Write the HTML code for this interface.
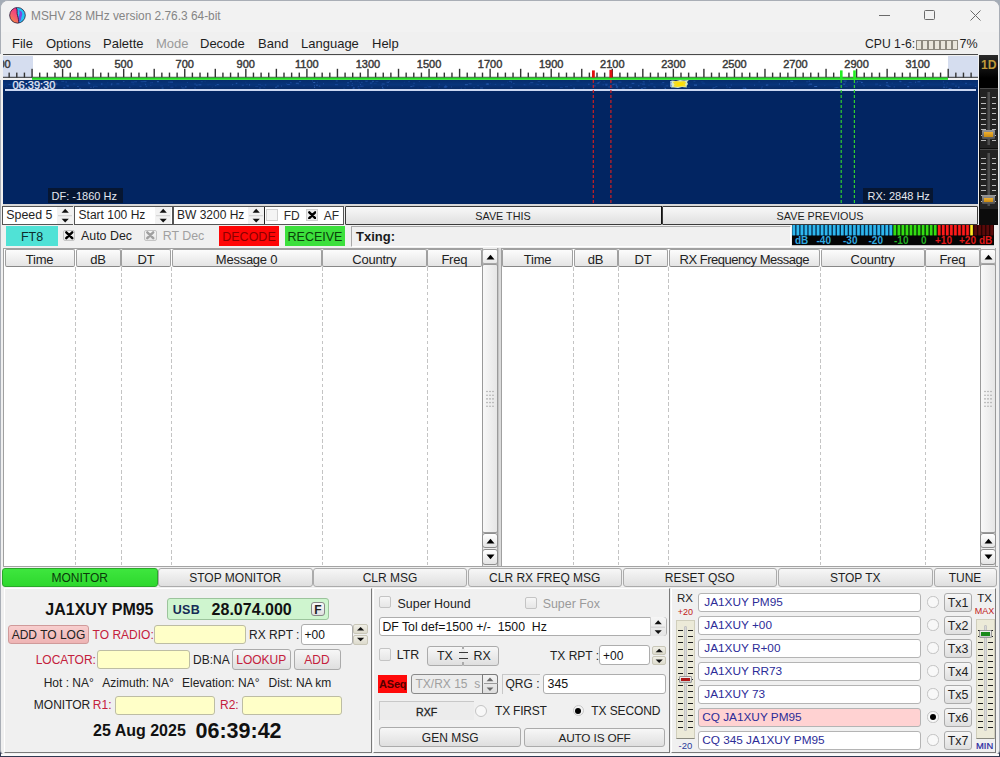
<!DOCTYPE html><html><head><meta charset="utf-8"><style>
*{margin:0;padding:0;box-sizing:border-box}
html,body{width:1000px;height:757px;overflow:hidden}
body{background:linear-gradient(#a4acb6,#7a8494 40%,#303850);position:relative;font-family:"Liberation Sans",sans-serif;color:#1e1e1e;font-size:12px}
div{position:absolute}
.t{white-space:nowrap;line-height:1}
.ctr{display:flex;align-items:center;justify-content:center;white-space:nowrap;line-height:1;padding-top:1.5px}
.btn{background:linear-gradient(#f7f7f7,#dfdfdf);border:1px solid #ababab;border-radius:3px}
.hdr{background:linear-gradient(#fcfcfc,#e4e4e4);border:1px solid #a0a0a0;border-bottom-color:#888;border-radius:2px;font-size:13px;color:#222;padding-top:2.5px !important;letter-spacing:-0.25px}
.yel{background:#ffffc8;border:1px solid #bdbda4;border-radius:3px}
.fld{background:#fff;border:1px solid #adadad;border-radius:3px}
.cb{background:linear-gradient(#f6f6f6,#e6e6e6);border:1px solid #c4c4c4;border-radius:2px}
.vd{background:repeating-linear-gradient(#c4c4c4 0 3.6px,transparent 3.6px 6.15px);width:1px}
</style></head><body>
<div style="left:0px;top:0px;width:999.5px;height:756px;background:#f0f0f0;border-radius:8px 8px 6px 6px;border:1px solid #a9aeb6;"></div>
<div style="left:1px;top:1px;width:998px;height:31px;background:#f2f2f2;border-radius:7px 7px 0 0;"></div>
<svg style="position:absolute;left:8.5px;top:6.5px" width="17" height="17" viewBox="0 0 17 17">
<defs><linearGradient id="gL" x1="0.2" y1="1" x2="0.7" y2="0"><stop offset="0" stop-color="#f29a2a"/><stop offset="0.45" stop-color="#f4606a"/><stop offset="1" stop-color="#f02c90"/></linearGradient>
<clipPath id="cc"><circle cx="8.5" cy="8.3" r="7.9"/></clipPath></defs>
<g clip-path="url(#cc)">
<rect x="0" y="0" width="17" height="17" fill="#24c4f2"/>
<path d="M9.5 3.2 C13 3.5 14 6.5 12.8 9 C11.8 11.5 12.5 13.5 10.5 14.8 C9.8 12 9 10 10 8 C11 6 10.5 4.5 9.5 3.2Z" fill="#7a48e0"/>
<path d="M7 0 C9 3 7.5 6 8.5 8.5 C9.5 11 9.5 14 10 17 L0 17 L0 0Z" fill="url(#gL)"/>
<path d="M7 0 C9 3 7.5 6 8.5 8.5 C9.5 11 9.5 14 10 17" stroke="#3a1040" stroke-width="0.9" fill="none"/>
</g>
<circle cx="8.5" cy="8.3" r="7.8" fill="none" stroke="#3a2040" stroke-width="0.8"/>
</svg>
<div class="t" style="left:31px;top:11px;font-size:11.9px;color:#858585">MSHV 28 MHz version 2.76.3 64-bit</div>
<div style="left:879px;top:15px;width:10.5px;height:1px;background:#6a6a6a"></div>
<div style="left:924px;top:10px;width:11px;height:10px;border:1px solid #6a6a6a;border-radius:1.5px"></div>
<svg style="position:absolute;left:970px;top:10px" width="11" height="11" viewBox="0 0 11 11"><path d="M0.5 0.5L10.5 10.5M10.5 0.5L0.5 10.5" stroke="#6a6a6a" stroke-width="1"/></svg>
<div class="t" style="left:12px;top:36.6px;font-size:13px;color:#1e1e1e">File</div>
<div class="t" style="left:46px;top:36.6px;font-size:13px;color:#1e1e1e">Options</div>
<div class="t" style="left:103px;top:36.6px;font-size:13px;color:#1e1e1e">Palette</div>
<div class="t" style="left:156px;top:36.6px;font-size:13px;color:#9a9a9a">Mode</div>
<div class="t" style="left:200px;top:36.6px;font-size:13px;color:#1e1e1e">Decode</div>
<div class="t" style="left:258px;top:36.6px;font-size:13px;color:#1e1e1e">Band</div>
<div class="t" style="left:301px;top:36.6px;font-size:13px;color:#1e1e1e">Language</div>
<div class="t" style="left:372px;top:36.6px;font-size:13px;color:#1e1e1e">Help</div>
<div class="t" style="left:865px;top:37.5px;font-size:12.2px;color:#1e1e1e">CPU 1-6:</div>
<div style="left:916px;top:39.5px;width:5.6px;height:10.5px;border:1px solid #8e8a80;background:#e9e6dc"></div>
<div style="left:922px;top:39.5px;width:5.6px;height:10.5px;border:1px solid #8e8a80;background:#e9e6dc"></div>
<div style="left:928px;top:39.5px;width:5.6px;height:10.5px;border:1px solid #8e8a80;background:#e9e6dc"></div>
<div style="left:934px;top:39.5px;width:5.6px;height:10.5px;border:1px solid #8e8a80;background:#e9e6dc"></div>
<div style="left:940px;top:39.5px;width:5.6px;height:10.5px;border:1px solid #8e8a80;background:#e9e6dc"></div>
<div style="left:946px;top:39.5px;width:5.6px;height:10.5px;border:1px solid #8e8a80;background:#e9e6dc"></div>
<div style="left:952px;top:39.5px;width:5.6px;height:10.5px;border:1px solid #8e8a80;background:#e9e6dc"></div>
<div class="t" style="left:959.5px;top:37.5px;font-size:12.5px;color:#1e1e1e">7%</div>
<div style="left:3px;top:54px;width:975px;height:1.4px;background:#4a4a4a"></div>
<div style="left:3px;top:55.5px;width:975px;height:22px;background:#fff"></div>
<div style="left:3px;top:55.5px;width:29.5px;height:22px;background:#d5ddef"></div>
<div style="left:948px;top:55.5px;width:30px;height:22px;background:#d5ddef"></div>
<svg style="position:absolute;left:0;top:0" width="1000" height="90"><rect x="8.46" y="72.6" width="1.4" height="5" fill="#333"/><rect x="16.09" y="72.6" width="1.4" height="5" fill="#333"/><rect x="23.73" y="72.6" width="1.4" height="5" fill="#333"/><rect x="31.36" y="68.8" width="1.4" height="8.8" fill="#333"/><rect x="39.00" y="72.6" width="1.4" height="5" fill="#333"/><rect x="46.63" y="72.6" width="1.4" height="5" fill="#333"/><rect x="54.27" y="72.6" width="1.4" height="5" fill="#333"/><rect x="61.90" y="68.8" width="1.4" height="8.8" fill="#333"/><rect x="69.53" y="72.6" width="1.4" height="5" fill="#333"/><rect x="77.17" y="72.6" width="1.4" height="5" fill="#333"/><rect x="84.80" y="72.6" width="1.4" height="5" fill="#333"/><rect x="92.44" y="68.8" width="1.4" height="8.8" fill="#333"/><rect x="100.07" y="72.6" width="1.4" height="5" fill="#333"/><rect x="107.71" y="72.6" width="1.4" height="5" fill="#333"/><rect x="115.34" y="72.6" width="1.4" height="5" fill="#333"/><rect x="122.98" y="68.8" width="1.4" height="8.8" fill="#333"/><rect x="130.61" y="72.6" width="1.4" height="5" fill="#333"/><rect x="138.25" y="72.6" width="1.4" height="5" fill="#333"/><rect x="145.88" y="72.6" width="1.4" height="5" fill="#333"/><rect x="153.51" y="68.8" width="1.4" height="8.8" fill="#333"/><rect x="161.15" y="72.6" width="1.4" height="5" fill="#333"/><rect x="168.78" y="72.6" width="1.4" height="5" fill="#333"/><rect x="176.42" y="72.6" width="1.4" height="5" fill="#333"/><rect x="184.05" y="68.8" width="1.4" height="8.8" fill="#333"/><rect x="191.69" y="72.6" width="1.4" height="5" fill="#333"/><rect x="199.32" y="72.6" width="1.4" height="5" fill="#333"/><rect x="206.96" y="72.6" width="1.4" height="5" fill="#333"/><rect x="214.59" y="68.8" width="1.4" height="8.8" fill="#333"/><rect x="222.22" y="72.6" width="1.4" height="5" fill="#333"/><rect x="229.86" y="72.6" width="1.4" height="5" fill="#333"/><rect x="237.49" y="72.6" width="1.4" height="5" fill="#333"/><rect x="245.13" y="68.8" width="1.4" height="8.8" fill="#333"/><rect x="252.76" y="72.6" width="1.4" height="5" fill="#333"/><rect x="260.40" y="72.6" width="1.4" height="5" fill="#333"/><rect x="268.03" y="72.6" width="1.4" height="5" fill="#333"/><rect x="275.67" y="68.8" width="1.4" height="8.8" fill="#333"/><rect x="283.30" y="72.6" width="1.4" height="5" fill="#333"/><rect x="290.94" y="72.6" width="1.4" height="5" fill="#333"/><rect x="298.57" y="72.6" width="1.4" height="5" fill="#333"/><rect x="306.20" y="68.8" width="1.4" height="8.8" fill="#333"/><rect x="313.84" y="72.6" width="1.4" height="5" fill="#333"/><rect x="321.47" y="72.6" width="1.4" height="5" fill="#333"/><rect x="329.11" y="72.6" width="1.4" height="5" fill="#333"/><rect x="336.74" y="68.8" width="1.4" height="8.8" fill="#333"/><rect x="344.38" y="72.6" width="1.4" height="5" fill="#333"/><rect x="352.01" y="72.6" width="1.4" height="5" fill="#333"/><rect x="359.65" y="72.6" width="1.4" height="5" fill="#333"/><rect x="367.28" y="68.8" width="1.4" height="8.8" fill="#333"/><rect x="374.91" y="72.6" width="1.4" height="5" fill="#333"/><rect x="382.55" y="72.6" width="1.4" height="5" fill="#333"/><rect x="390.18" y="72.6" width="1.4" height="5" fill="#333"/><rect x="397.82" y="68.8" width="1.4" height="8.8" fill="#333"/><rect x="405.45" y="72.6" width="1.4" height="5" fill="#333"/><rect x="413.09" y="72.6" width="1.4" height="5" fill="#333"/><rect x="420.72" y="72.6" width="1.4" height="5" fill="#333"/><rect x="428.36" y="68.8" width="1.4" height="8.8" fill="#333"/><rect x="435.99" y="72.6" width="1.4" height="5" fill="#333"/><rect x="443.62" y="72.6" width="1.4" height="5" fill="#333"/><rect x="451.26" y="72.6" width="1.4" height="5" fill="#333"/><rect x="458.89" y="68.8" width="1.4" height="8.8" fill="#333"/><rect x="466.53" y="72.6" width="1.4" height="5" fill="#333"/><rect x="474.16" y="72.6" width="1.4" height="5" fill="#333"/><rect x="481.80" y="72.6" width="1.4" height="5" fill="#333"/><rect x="489.43" y="68.8" width="1.4" height="8.8" fill="#333"/><rect x="497.07" y="72.6" width="1.4" height="5" fill="#333"/><rect x="504.70" y="72.6" width="1.4" height="5" fill="#333"/><rect x="512.34" y="72.6" width="1.4" height="5" fill="#333"/><rect x="519.97" y="68.8" width="1.4" height="8.8" fill="#333"/><rect x="527.60" y="72.6" width="1.4" height="5" fill="#333"/><rect x="535.24" y="72.6" width="1.4" height="5" fill="#333"/><rect x="542.87" y="72.6" width="1.4" height="5" fill="#333"/><rect x="550.51" y="68.8" width="1.4" height="8.8" fill="#333"/><rect x="558.14" y="72.6" width="1.4" height="5" fill="#333"/><rect x="565.78" y="72.6" width="1.4" height="5" fill="#333"/><rect x="573.41" y="72.6" width="1.4" height="5" fill="#333"/><rect x="581.05" y="68.8" width="1.4" height="8.8" fill="#333"/><rect x="588.68" y="72.6" width="1.4" height="5" fill="#333"/><rect x="596.31" y="72.6" width="1.4" height="5" fill="#333"/><rect x="603.95" y="72.6" width="1.4" height="5" fill="#333"/><rect x="611.58" y="68.8" width="1.4" height="8.8" fill="#333"/><rect x="619.22" y="72.6" width="1.4" height="5" fill="#333"/><rect x="626.85" y="72.6" width="1.4" height="5" fill="#333"/><rect x="634.49" y="72.6" width="1.4" height="5" fill="#333"/><rect x="642.12" y="68.8" width="1.4" height="8.8" fill="#333"/><rect x="649.76" y="72.6" width="1.4" height="5" fill="#333"/><rect x="657.39" y="72.6" width="1.4" height="5" fill="#333"/><rect x="665.03" y="72.6" width="1.4" height="5" fill="#333"/><rect x="672.66" y="68.8" width="1.4" height="8.8" fill="#333"/><rect x="680.29" y="72.6" width="1.4" height="5" fill="#333"/><rect x="687.93" y="72.6" width="1.4" height="5" fill="#333"/><rect x="695.56" y="72.6" width="1.4" height="5" fill="#333"/><rect x="703.20" y="68.8" width="1.4" height="8.8" fill="#333"/><rect x="710.83" y="72.6" width="1.4" height="5" fill="#333"/><rect x="718.47" y="72.6" width="1.4" height="5" fill="#333"/><rect x="726.10" y="72.6" width="1.4" height="5" fill="#333"/><rect x="733.74" y="68.8" width="1.4" height="8.8" fill="#333"/><rect x="741.37" y="72.6" width="1.4" height="5" fill="#333"/><rect x="749.00" y="72.6" width="1.4" height="5" fill="#333"/><rect x="756.64" y="72.6" width="1.4" height="5" fill="#333"/><rect x="764.27" y="68.8" width="1.4" height="8.8" fill="#333"/><rect x="771.91" y="72.6" width="1.4" height="5" fill="#333"/><rect x="779.54" y="72.6" width="1.4" height="5" fill="#333"/><rect x="787.18" y="72.6" width="1.4" height="5" fill="#333"/><rect x="794.81" y="68.8" width="1.4" height="8.8" fill="#333"/><rect x="802.45" y="72.6" width="1.4" height="5" fill="#333"/><rect x="810.08" y="72.6" width="1.4" height="5" fill="#333"/><rect x="817.72" y="72.6" width="1.4" height="5" fill="#333"/><rect x="825.35" y="68.8" width="1.4" height="8.8" fill="#333"/><rect x="832.98" y="72.6" width="1.4" height="5" fill="#333"/><rect x="840.62" y="72.6" width="1.4" height="5" fill="#333"/><rect x="848.25" y="72.6" width="1.4" height="5" fill="#333"/><rect x="855.89" y="68.8" width="1.4" height="8.8" fill="#333"/><rect x="863.52" y="72.6" width="1.4" height="5" fill="#333"/><rect x="871.16" y="72.6" width="1.4" height="5" fill="#333"/><rect x="878.79" y="72.6" width="1.4" height="5" fill="#333"/><rect x="886.43" y="68.8" width="1.4" height="8.8" fill="#333"/><rect x="894.06" y="72.6" width="1.4" height="5" fill="#333"/><rect x="901.69" y="72.6" width="1.4" height="5" fill="#333"/><rect x="909.33" y="72.6" width="1.4" height="5" fill="#333"/><rect x="916.96" y="68.8" width="1.4" height="8.8" fill="#333"/><rect x="924.60" y="72.6" width="1.4" height="5" fill="#333"/><rect x="932.23" y="72.6" width="1.4" height="5" fill="#333"/><rect x="939.87" y="72.6" width="1.4" height="5" fill="#333"/><rect x="947.50" y="68.8" width="1.4" height="8.8" fill="#333"/><rect x="955.14" y="72.6" width="1.4" height="5" fill="#333"/><rect x="962.77" y="72.6" width="1.4" height="5" fill="#333"/><rect x="970.41" y="72.6" width="1.4" height="5" fill="#333"/><rect x="3" y="76.8" width="975" height="1" fill="#333"/><rect x="32" y="77.6" width="916" height="2.2" fill="#22dd22"/><rect x="592" y="70.4" width="2.8" height="7.2" fill="#e01010"/><rect x="609.4" y="69.8" width="3" height="7.8" fill="#e01010"/><rect x="840" y="70.4" width="2.6" height="9" fill="#22ee22"/><rect x="853.2" y="70.4" width="2.6" height="9" fill="#22ee22"/></svg>
<div class="t" style="left:-18.5px;top:58.8px;width:40px;text-align:center;font-size:11px;-webkit-text-stroke:0.45px #3a3a3a;color:#3a3a3a">100</div>
<div class="t" style="left:42.6px;top:58.8px;width:40px;text-align:center;font-size:11px;-webkit-text-stroke:0.45px #3a3a3a;color:#3a3a3a">300</div>
<div class="t" style="left:103.7px;top:58.8px;width:40px;text-align:center;font-size:11px;-webkit-text-stroke:0.45px #3a3a3a;color:#3a3a3a">500</div>
<div class="t" style="left:164.8px;top:58.8px;width:40px;text-align:center;font-size:11px;-webkit-text-stroke:0.45px #3a3a3a;color:#3a3a3a">700</div>
<div class="t" style="left:225.8px;top:58.8px;width:40px;text-align:center;font-size:11px;-webkit-text-stroke:0.45px #3a3a3a;color:#3a3a3a">900</div>
<div class="t" style="left:286.9px;top:58.8px;width:40px;text-align:center;font-size:11px;-webkit-text-stroke:0.45px #3a3a3a;color:#3a3a3a">1100</div>
<div class="t" style="left:348.0px;top:58.8px;width:40px;text-align:center;font-size:11px;-webkit-text-stroke:0.45px #3a3a3a;color:#3a3a3a">1300</div>
<div class="t" style="left:409.1px;top:58.8px;width:40px;text-align:center;font-size:11px;-webkit-text-stroke:0.45px #3a3a3a;color:#3a3a3a">1500</div>
<div class="t" style="left:470.1px;top:58.8px;width:40px;text-align:center;font-size:11px;-webkit-text-stroke:0.45px #3a3a3a;color:#3a3a3a">1700</div>
<div class="t" style="left:531.2px;top:58.8px;width:40px;text-align:center;font-size:11px;-webkit-text-stroke:0.45px #3a3a3a;color:#3a3a3a">1900</div>
<div class="t" style="left:592.3px;top:58.8px;width:40px;text-align:center;font-size:11px;-webkit-text-stroke:0.45px #3a3a3a;color:#3a3a3a">2100</div>
<div class="t" style="left:653.4px;top:58.8px;width:40px;text-align:center;font-size:11px;-webkit-text-stroke:0.45px #3a3a3a;color:#3a3a3a">2300</div>
<div class="t" style="left:714.4px;top:58.8px;width:40px;text-align:center;font-size:11px;-webkit-text-stroke:0.45px #3a3a3a;color:#3a3a3a">2500</div>
<div class="t" style="left:775.5px;top:58.8px;width:40px;text-align:center;font-size:11px;-webkit-text-stroke:0.45px #3a3a3a;color:#3a3a3a">2700</div>
<div class="t" style="left:836.6px;top:58.8px;width:40px;text-align:center;font-size:11px;-webkit-text-stroke:0.45px #3a3a3a;color:#3a3a3a">2900</div>
<div class="t" style="left:897.7px;top:58.8px;width:40px;text-align:center;font-size:11px;-webkit-text-stroke:0.45px #3a3a3a;color:#3a3a3a">3100</div>
<div style="left:0px;top:54px;width:3px;height:26px;background:#f0f0f0"></div>
<div style="left:3px;top:79.8px;width:975px;height:123.8px;background:#022562"></div>
<div style="left:3px;top:79.8px;width:975px;height:9.6px;background:linear-gradient(#062c6c,#08347a 50%,#062a66)"></div>
<svg style="position:absolute;left:0;top:79px" width="1000" height="11"><rect x="319.1" y="6.4" width="1" height="1" fill="#1f50a8" opacity="0.51"/><rect x="61.3" y="1.8" width="3" height="1" fill="#3a70c8" opacity="0.38"/><rect x="93.0" y="7.7" width="1" height="1" fill="#2a60b8" opacity="0.63"/><rect x="570.5" y="5.9" width="1" height="1" fill="#2a60b8" opacity="0.37"/><rect x="837.7" y="2.6" width="1" height="1" fill="#184a9a" opacity="0.60"/><rect x="666.5" y="5.8" width="1.5" height="1" fill="#184a9a" opacity="0.39"/><rect x="605.4" y="5.5" width="2" height="1" fill="#3a70c8" opacity="0.61"/><rect x="444.6" y="7.5" width="1.5" height="1" fill="#1f50a8" opacity="0.61"/><rect x="712.6" y="8.9" width="1" height="1" fill="#3a70c8" opacity="0.42"/><rect x="334.9" y="5.2" width="3" height="1" fill="#1f50a8" opacity="0.73"/><rect x="921.3" y="6.5" width="1" height="1" fill="#184a9a" opacity="0.64"/><rect x="281.1" y="6.5" width="1" height="1" fill="#3a70c8" opacity="0.51"/><rect x="597.6" y="3.1" width="2" height="1" fill="#2a60b8" opacity="0.68"/><rect x="486.6" y="4.5" width="2" height="1" fill="#2a60b8" opacity="0.72"/><rect x="843.1" y="4.6" width="2" height="1" fill="#3a70c8" opacity="0.78"/><rect x="151.4" y="3.2" width="1.5" height="1" fill="#1f50a8" opacity="0.57"/><rect x="576.4" y="1.5" width="3" height="1" fill="#184a9a" opacity="0.62"/><rect x="314.1" y="7.9" width="1" height="1" fill="#3a70c8" opacity="0.75"/><rect x="778.9" y="4.5" width="1" height="1" fill="#3a70c8" opacity="0.64"/><rect x="65.4" y="3.1" width="1.5" height="1" fill="#1f50a8" opacity="0.50"/><rect x="56.0" y="2.6" width="1" height="1" fill="#184a9a" opacity="0.63"/><rect x="73.2" y="4.3" width="2" height="1" fill="#184a9a" opacity="0.62"/><rect x="464.9" y="5.2" width="3" height="1" fill="#3a70c8" opacity="0.57"/><rect x="88.3" y="4.1" width="2" height="1" fill="#3a70c8" opacity="0.72"/><rect x="161.6" y="8.6" width="2" height="1" fill="#2a60b8" opacity="0.66"/><rect x="891.7" y="3.7" width="1" height="1" fill="#184a9a" opacity="0.58"/><rect x="886.0" y="3.2" width="2" height="1" fill="#2a60b8" opacity="0.63"/><rect x="194.3" y="4.5" width="1.5" height="1" fill="#2a60b8" opacity="0.58"/><rect x="349.9" y="1.7" width="2" height="1" fill="#3a70c8" opacity="0.47"/><rect x="358.7" y="3.2" width="1.5" height="1" fill="#184a9a" opacity="0.44"/><rect x="610.3" y="7.8" width="3" height="1" fill="#184a9a" opacity="0.71"/><rect x="887.5" y="7.1" width="3" height="1" fill="#2a60b8" opacity="0.55"/><rect x="621.8" y="8.6" width="3" height="1" fill="#3a70c8" opacity="0.53"/><rect x="169.9" y="2.6" width="3" height="1" fill="#2a60b8" opacity="0.63"/><rect x="583.0" y="8.5" width="1.5" height="1" fill="#2a60b8" opacity="0.36"/><rect x="32.2" y="5.3" width="2" height="1" fill="#184a9a" opacity="0.59"/><rect x="814.2" y="7.0" width="3" height="1" fill="#3a70c8" opacity="0.72"/><rect x="856.8" y="2.6" width="1" height="1" fill="#3a70c8" opacity="0.70"/><rect x="150.3" y="6.1" width="1" height="1" fill="#1f50a8" opacity="0.50"/><rect x="765.7" y="5.7" width="1.5" height="1" fill="#2a60b8" opacity="0.47"/><rect x="754.1" y="5.7" width="1" height="1" fill="#3a70c8" opacity="0.50"/><rect x="198.4" y="5.3" width="3" height="1" fill="#2a60b8" opacity="0.66"/><rect x="855.2" y="3.4" width="1.5" height="1" fill="#3a70c8" opacity="0.41"/><rect x="123.0" y="2.0" width="1.5" height="1" fill="#3a70c8" opacity="0.38"/><rect x="654.4" y="8.2" width="1.5" height="1" fill="#184a9a" opacity="0.41"/><rect x="861.3" y="3.1" width="1" height="1" fill="#3a70c8" opacity="0.75"/><rect x="969.3" y="4.7" width="2" height="1" fill="#184a9a" opacity="0.39"/><rect x="360.0" y="4.9" width="1" height="1" fill="#3a70c8" opacity="0.50"/><rect x="610.2" y="2.0" width="1.5" height="1" fill="#1f50a8" opacity="0.39"/><rect x="660.7" y="4.5" width="3" height="1" fill="#184a9a" opacity="0.39"/><rect x="417.6" y="8.5" width="1" height="1" fill="#184a9a" opacity="0.39"/><rect x="835.5" y="8.0" width="3" height="1" fill="#1f50a8" opacity="0.50"/><rect x="264.8" y="5.5" width="1.5" height="1" fill="#1f50a8" opacity="0.79"/><rect x="259.0" y="8.5" width="2" height="1" fill="#2a60b8" opacity="0.48"/><rect x="490.1" y="4.1" width="1" height="1" fill="#184a9a" opacity="0.37"/><rect x="22.9" y="8.8" width="3" height="1" fill="#2a60b8" opacity="0.77"/><rect x="424.2" y="7.8" width="3" height="1" fill="#184a9a" opacity="0.66"/><rect x="958.0" y="7.7" width="1.5" height="1" fill="#3a70c8" opacity="0.80"/><rect x="858.5" y="1.9" width="3" height="1" fill="#184a9a" opacity="0.62"/><rect x="676.9" y="2.9" width="2" height="1" fill="#3a70c8" opacity="0.35"/><rect x="358.2" y="8.9" width="2" height="1" fill="#2a60b8" opacity="0.37"/><rect x="860.9" y="2.9" width="2" height="1" fill="#3a70c8" opacity="0.39"/><rect x="387.2" y="6.2" width="1" height="1" fill="#2a60b8" opacity="0.65"/><rect x="382.8" y="8.9" width="1.5" height="1" fill="#184a9a" opacity="0.68"/><rect x="628.9" y="7.8" width="3" height="1" fill="#2a60b8" opacity="0.76"/><rect x="793.5" y="6.6" width="1.5" height="1" fill="#1f50a8" opacity="0.36"/><rect x="134.1" y="2.3" width="3" height="1" fill="#1f50a8" opacity="0.63"/><rect x="612.4" y="5.2" width="1" height="1" fill="#3a70c8" opacity="0.71"/><rect x="730.8" y="5.5" width="1" height="1" fill="#3a70c8" opacity="0.46"/><rect x="77.2" y="7.0" width="1.5" height="1" fill="#2a60b8" opacity="0.68"/><rect x="951.5" y="4.4" width="3" height="1" fill="#184a9a" opacity="0.70"/><rect x="603.5" y="2.1" width="1.5" height="1" fill="#184a9a" opacity="0.46"/><rect x="725.9" y="5.8" width="1" height="1" fill="#3a70c8" opacity="0.38"/><rect x="287.1" y="5.0" width="3" height="1" fill="#1f50a8" opacity="0.80"/><rect x="537.6" y="2.1" width="3" height="1" fill="#1f50a8" opacity="0.48"/><rect x="79.2" y="9.0" width="2" height="1" fill="#3a70c8" opacity="0.44"/><rect x="922.2" y="5.9" width="1.5" height="1" fill="#184a9a" opacity="0.78"/><rect x="687.2" y="8.2" width="3" height="1" fill="#3a70c8" opacity="0.36"/><rect x="8.5" y="4.9" width="2" height="1" fill="#2a60b8" opacity="0.54"/><rect x="369.8" y="4.0" width="2" height="1" fill="#184a9a" opacity="0.73"/><rect x="286.1" y="4.4" width="1" height="1" fill="#184a9a" opacity="0.77"/><rect x="277.2" y="6.5" width="1.5" height="1" fill="#2a60b8" opacity="0.79"/><rect x="428.2" y="7.3" width="3" height="1" fill="#1f50a8" opacity="0.72"/><rect x="617.0" y="8.6" width="1.5" height="1" fill="#1f50a8" opacity="0.37"/><rect x="715.4" y="7.1" width="2" height="1" fill="#3a70c8" opacity="0.37"/><rect x="904.0" y="5.0" width="2" height="1" fill="#184a9a" opacity="0.48"/><rect x="387.5" y="2.7" width="1.5" height="1" fill="#3a70c8" opacity="0.60"/><rect x="444.4" y="7.2" width="3" height="1" fill="#2a60b8" opacity="0.60"/><rect x="241.8" y="5.7" width="2" height="1" fill="#2a60b8" opacity="0.52"/><rect x="790.1" y="1.7" width="3" height="1" fill="#3a70c8" opacity="0.54"/><rect x="513.4" y="4.0" width="1" height="1" fill="#3a70c8" opacity="0.47"/><rect x="943.7" y="5.3" width="1.5" height="1" fill="#1f50a8" opacity="0.47"/><rect x="246.0" y="4.8" width="2" height="1" fill="#1f50a8" opacity="0.41"/><rect x="480.1" y="8.5" width="3" height="1" fill="#3a70c8" opacity="0.46"/><rect x="110.8" y="5.4" width="1" height="1" fill="#3a70c8" opacity="0.39"/><rect x="758.6" y="2.4" width="1" height="1" fill="#184a9a" opacity="0.78"/><rect x="612.7" y="4.8" width="1" height="1" fill="#1f50a8" opacity="0.38"/><rect x="381.4" y="6.0" width="1" height="1" fill="#184a9a" opacity="0.80"/><rect x="275.2" y="7.8" width="1.5" height="1" fill="#3a70c8" opacity="0.59"/><rect x="535.6" y="4.6" width="2" height="1" fill="#1f50a8" opacity="0.36"/><rect x="412.4" y="6.5" width="2" height="1" fill="#2a60b8" opacity="0.57"/><rect x="356.5" y="1.6" width="2" height="1" fill="#1f50a8" opacity="0.44"/><rect x="945.8" y="7.7" width="1.5" height="1" fill="#3a70c8" opacity="0.45"/><rect x="742.7" y="8.6" width="3" height="1" fill="#2a60b8" opacity="0.75"/><rect x="899.3" y="1.7" width="1.5" height="1" fill="#3a70c8" opacity="0.37"/><rect x="63.3" y="8.2" width="2" height="1" fill="#1f50a8" opacity="0.80"/><rect x="908.6" y="2.9" width="3" height="1" fill="#1f50a8" opacity="0.49"/><rect x="960.4" y="2.3" width="1" height="1" fill="#184a9a" opacity="0.39"/><rect x="373.7" y="3.8" width="3" height="1" fill="#1f50a8" opacity="0.37"/><rect x="464.3" y="8.4" width="1.5" height="1" fill="#184a9a" opacity="0.51"/><rect x="875.1" y="4.6" width="3" height="1" fill="#1f50a8" opacity="0.52"/><rect x="65.1" y="2.0" width="2" height="1" fill="#184a9a" opacity="0.47"/><rect x="312.0" y="1.5" width="1" height="1" fill="#1f50a8" opacity="0.72"/><rect x="795.4" y="5.2" width="1" height="1" fill="#184a9a" opacity="0.72"/><rect x="323.0" y="4.2" width="1" height="1" fill="#2a60b8" opacity="0.53"/><rect x="160.1" y="6.4" width="3" height="1" fill="#184a9a" opacity="0.42"/><rect x="418.8" y="2.0" width="1" height="1" fill="#2a60b8" opacity="0.39"/><rect x="438.6" y="4.6" width="1.5" height="1" fill="#1f50a8" opacity="0.70"/><rect x="290.1" y="3.5" width="2" height="1" fill="#184a9a" opacity="0.44"/><rect x="245.0" y="2.6" width="1.5" height="1" fill="#184a9a" opacity="0.38"/><rect x="249.1" y="5.4" width="1" height="1" fill="#3a70c8" opacity="0.80"/><rect x="104.3" y="7.6" width="3" height="1" fill="#184a9a" opacity="0.37"/><rect x="289.9" y="2.9" width="1.5" height="1" fill="#1f50a8" opacity="0.52"/><rect x="845.1" y="3.4" width="1" height="1" fill="#1f50a8" opacity="0.64"/><rect x="693.4" y="1.8" width="2" height="1" fill="#2a60b8" opacity="0.37"/><rect x="974.9" y="7.0" width="1.5" height="1" fill="#1f50a8" opacity="0.72"/><rect x="401.7" y="6.2" width="1" height="1" fill="#2a60b8" opacity="0.36"/><rect x="485.8" y="4.6" width="3" height="1" fill="#2a60b8" opacity="0.64"/><rect x="93.4" y="6.7" width="3" height="1" fill="#184a9a" opacity="0.65"/><rect x="410.3" y="7.1" width="2" height="1" fill="#3a70c8" opacity="0.54"/><rect x="357.9" y="7.0" width="1.5" height="1" fill="#1f50a8" opacity="0.55"/><rect x="156.9" y="2.2" width="2" height="1" fill="#3a70c8" opacity="0.70"/><rect x="131.1" y="2.6" width="3" height="1" fill="#1f50a8" opacity="0.61"/><rect x="171.5" y="2.7" width="1.5" height="1" fill="#1f50a8" opacity="0.40"/><rect x="942.9" y="2.4" width="1" height="1" fill="#3a70c8" opacity="0.49"/><rect x="626.1" y="6.2" width="1.5" height="1" fill="#3a70c8" opacity="0.43"/><rect x="216.6" y="5.4" width="3" height="1" fill="#184a9a" opacity="0.41"/><rect x="875.4" y="5.7" width="1" height="1" fill="#184a9a" opacity="0.40"/><rect x="613.2" y="4.7" width="1.5" height="1" fill="#3a70c8" opacity="0.53"/><rect x="361.4" y="2.8" width="1" height="1" fill="#3a70c8" opacity="0.56"/><rect x="791.2" y="2.0" width="2" height="1" fill="#3a70c8" opacity="0.51"/><rect x="783.2" y="6.4" width="1" height="1" fill="#2a60b8" opacity="0.39"/><rect x="501.1" y="5.3" width="3" height="1" fill="#2a60b8" opacity="0.36"/><rect x="676.8" y="2.5" width="3" height="1" fill="#184a9a" opacity="0.78"/><rect x="893.6" y="7.4" width="1.5" height="1" fill="#1f50a8" opacity="0.72"/><rect x="597.1" y="3.9" width="2" height="1" fill="#3a70c8" opacity="0.41"/><rect x="207.1" y="5.3" width="2" height="1" fill="#184a9a" opacity="0.37"/><rect x="181.6" y="8.5" width="2" height="1" fill="#3a70c8" opacity="0.43"/><rect x="766.3" y="5.5" width="2" height="1" fill="#3a70c8" opacity="0.60"/><rect x="615.9" y="7.5" width="2" height="1" fill="#3a70c8" opacity="0.80"/><rect x="565.0" y="7.2" width="3" height="1" fill="#2a60b8" opacity="0.43"/><rect x="726.3" y="7.6" width="2" height="1" fill="#184a9a" opacity="0.64"/><rect x="648.8" y="1.5" width="1" height="1" fill="#2a60b8" opacity="0.42"/><rect x="602.6" y="5.3" width="1" height="1" fill="#2a60b8" opacity="0.57"/><rect x="599.1" y="1.9" width="2" height="1" fill="#184a9a" opacity="0.40"/><rect x="351.4" y="5.9" width="1.5" height="1" fill="#2a60b8" opacity="0.51"/><rect x="808.6" y="1.6" width="1.5" height="1" fill="#2a60b8" opacity="0.55"/><rect x="66.8" y="6.5" width="2" height="1" fill="#3a70c8" opacity="0.72"/><rect x="943.1" y="7.7" width="2" height="1" fill="#3a70c8" opacity="0.62"/><rect x="507.1" y="2.7" width="1" height="1" fill="#1f50a8" opacity="0.38"/><rect x="29.5" y="2.7" width="1" height="1" fill="#1f50a8" opacity="0.63"/><rect x="642.1" y="4.6" width="3" height="1" fill="#2a60b8" opacity="0.58"/><rect x="468.6" y="4.3" width="3" height="1" fill="#3a70c8" opacity="0.39"/><rect x="640.9" y="9.0" width="2" height="1" fill="#2a60b8" opacity="0.64"/><rect x="260.4" y="6.3" width="3" height="1" fill="#184a9a" opacity="0.48"/><rect x="87.9" y="2.8" width="1.5" height="1" fill="#2a60b8" opacity="0.78"/><rect x="728.8" y="8.1" width="2" height="1" fill="#2a60b8" opacity="0.52"/><rect x="525.3" y="5.5" width="1" height="1" fill="#1f50a8" opacity="0.55"/><rect x="303.5" y="6.2" width="1" height="1" fill="#2a60b8" opacity="0.42"/><rect x="31.1" y="8.5" width="2" height="1" fill="#2a60b8" opacity="0.67"/><rect x="34.9" y="6.3" width="1" height="1" fill="#1f50a8" opacity="0.68"/><rect x="357.5" y="7.6" width="1" height="1" fill="#3a70c8" opacity="0.40"/><rect x="204.6" y="1.8" width="1" height="1" fill="#184a9a" opacity="0.56"/><rect x="631.9" y="4.0" width="2" height="1" fill="#1f50a8" opacity="0.51"/><rect x="907.2" y="7.2" width="2" height="1" fill="#3a70c8" opacity="0.73"/><rect x="604.7" y="4.6" width="3" height="1" fill="#1f50a8" opacity="0.51"/><rect x="688.5" y="3.1" width="1" height="1" fill="#184a9a" opacity="0.43"/><rect x="6.3" y="7.2" width="1" height="1" fill="#1f50a8" opacity="0.51"/><rect x="915.1" y="2.7" width="1" height="1" fill="#3a70c8" opacity="0.70"/><rect x="614.1" y="4.5" width="3" height="1" fill="#1f50a8" opacity="0.54"/><rect x="631.5" y="3.8" width="3" height="1" fill="#2a60b8" opacity="0.52"/><rect x="862.5" y="5.0" width="1" height="1" fill="#184a9a" opacity="0.61"/><rect x="318.6" y="6.7" width="2" height="1" fill="#2a60b8" opacity="0.41"/><rect x="235.8" y="3.8" width="1.5" height="1" fill="#2a60b8" opacity="0.79"/><rect x="343.2" y="8.7" width="2" height="1" fill="#1f50a8" opacity="0.42"/><rect x="643.2" y="2.6" width="1.5" height="1" fill="#184a9a" opacity="0.68"/><rect x="426.9" y="6.3" width="1" height="1" fill="#184a9a" opacity="0.44"/><rect x="381.7" y="4.5" width="3" height="1" fill="#2a60b8" opacity="0.58"/><rect x="618.4" y="2.6" width="3" height="1" fill="#1f50a8" opacity="0.68"/><rect x="885.8" y="5.8" width="3" height="1" fill="#2a60b8" opacity="0.65"/><rect x="637.9" y="6.3" width="1.5" height="1" fill="#2a60b8" opacity="0.64"/><rect x="445.3" y="6.2" width="1" height="1" fill="#3a70c8" opacity="0.46"/><rect x="473.3" y="7.9" width="1.5" height="1" fill="#184a9a" opacity="0.70"/><rect x="382.0" y="8.8" width="1" height="1" fill="#184a9a" opacity="0.59"/><rect x="917.4" y="2.3" width="3" height="1" fill="#2a60b8" opacity="0.67"/><rect x="809.1" y="4.6" width="3" height="1" fill="#2a60b8" opacity="0.80"/><rect x="183.3" y="8.5" width="2" height="1" fill="#1f50a8" opacity="0.46"/><rect x="375.4" y="2.1" width="3" height="1" fill="#184a9a" opacity="0.61"/><rect x="111.0" y="4.5" width="1.5" height="1" fill="#3a70c8" opacity="0.56"/><rect x="761.5" y="7.4" width="1.5" height="1" fill="#184a9a" opacity="0.67"/><rect x="663.5" y="7.5" width="2" height="1" fill="#184a9a" opacity="0.46"/><rect x="297.8" y="4.7" width="1" height="1" fill="#184a9a" opacity="0.42"/><rect x="299.1" y="2.1" width="2" height="1" fill="#2a60b8" opacity="0.59"/><rect x="642.6" y="2.0" width="2" height="1" fill="#184a9a" opacity="0.62"/><rect x="185.1" y="7.4" width="1.5" height="1" fill="#3a70c8" opacity="0.71"/><rect x="653.4" y="7.4" width="2" height="1" fill="#2a60b8" opacity="0.57"/><rect x="211.7" y="7.8" width="1" height="1" fill="#1f50a8" opacity="0.47"/><rect x="232.2" y="5.2" width="1" height="1" fill="#3a70c8" opacity="0.56"/><rect x="145.1" y="5.2" width="1" height="1" fill="#2a60b8" opacity="0.73"/><rect x="650.3" y="4.3" width="3" height="1" fill="#1f50a8" opacity="0.43"/><rect x="354.6" y="1.7" width="1" height="1" fill="#184a9a" opacity="0.71"/><rect x="96.2" y="7.2" width="1.5" height="1" fill="#1f50a8" opacity="0.45"/><rect x="408.1" y="2.2" width="2" height="1" fill="#184a9a" opacity="0.56"/><rect x="209.4" y="4.7" width="1" height="1" fill="#184a9a" opacity="0.48"/><rect x="807.9" y="5.3" width="2" height="1" fill="#184a9a" opacity="0.79"/><rect x="639.9" y="4.0" width="2" height="1" fill="#184a9a" opacity="0.41"/><rect x="948.6" y="9.0" width="3" height="1" fill="#3a70c8" opacity="0.60"/><rect x="53.2" y="1.5" width="1.5" height="1" fill="#3a70c8" opacity="0.62"/><rect x="643.3" y="8.3" width="3" height="1" fill="#2a60b8" opacity="0.63"/><rect x="665.5" y="6.5" width="3" height="1" fill="#2a60b8" opacity="0.40"/><rect x="180.9" y="7.3" width="1" height="1" fill="#184a9a" opacity="0.74"/><rect x="139.5" y="6.8" width="2" height="1" fill="#2a60b8" opacity="0.54"/><rect x="313.9" y="6.3" width="1" height="1" fill="#3a70c8" opacity="0.61"/><rect x="43.2" y="7.6" width="3" height="1" fill="#3a70c8" opacity="0.38"/><rect x="664.6" y="8.9" width="1.5" height="1" fill="#3a70c8" opacity="0.70"/><rect x="537.3" y="5.0" width="1.5" height="1" fill="#1f50a8" opacity="0.54"/><rect x="216.7" y="5.0" width="2" height="1" fill="#2a60b8" opacity="0.55"/><rect x="359.9" y="6.7" width="1.5" height="1" fill="#1f50a8" opacity="0.48"/><rect x="545.8" y="6.5" width="2" height="1" fill="#1f50a8" opacity="0.67"/><rect x="16.1" y="6.4" width="1" height="1" fill="#3a70c8" opacity="0.49"/><rect x="712.6" y="8.0" width="3" height="1" fill="#1f50a8" opacity="0.49"/><rect x="460.7" y="8.7" width="1" height="1" fill="#184a9a" opacity="0.78"/><rect x="444.2" y="7.2" width="2" height="1" fill="#184a9a" opacity="0.48"/><rect x="608.2" y="7.5" width="2" height="1" fill="#1f50a8" opacity="0.72"/><rect x="588.1" y="4.7" width="1.5" height="1" fill="#3a70c8" opacity="0.52"/><rect x="369.9" y="3.3" width="3" height="1" fill="#184a9a" opacity="0.66"/><rect x="316.9" y="2.7" width="1" height="1" fill="#184a9a" opacity="0.72"/><rect x="559.8" y="7.9" width="3" height="1" fill="#184a9a" opacity="0.59"/><rect x="528.8" y="4.4" width="1.5" height="1" fill="#184a9a" opacity="0.62"/><rect x="662.3" y="3.0" width="2" height="1" fill="#1f50a8" opacity="0.71"/><rect x="450.9" y="7.5" width="1" height="1" fill="#2a60b8" opacity="0.53"/><rect x="510.4" y="7.7" width="2" height="1" fill="#3a70c8" opacity="0.58"/><rect x="200.8" y="2.2" width="2" height="1" fill="#184a9a" opacity="0.61"/><rect x="353.1" y="7.9" width="1.5" height="1" fill="#1f50a8" opacity="0.77"/><rect x="365.5" y="2.1" width="2" height="1" fill="#1f50a8" opacity="0.51"/><rect x="508.9" y="1.8" width="3" height="1" fill="#2a60b8" opacity="0.47"/><rect x="760.8" y="8.6" width="1.5" height="1" fill="#184a9a" opacity="0.73"/><rect x="371.9" y="1.8" width="2" height="1" fill="#3a70c8" opacity="0.57"/><rect x="899.5" y="2.2" width="2" height="1" fill="#2a60b8" opacity="0.64"/><rect x="386.3" y="2.7" width="1.5" height="1" fill="#2a60b8" opacity="0.43"/><rect x="255.2" y="7.0" width="3" height="1" fill="#1f50a8" opacity="0.40"/><rect x="313.2" y="3.0" width="2" height="1" fill="#3a70c8" opacity="0.69"/><rect x="107.3" y="3.4" width="1" height="1" fill="#184a9a" opacity="0.57"/><rect x="168.5" y="2.6" width="1" height="1" fill="#3a70c8" opacity="0.67"/><rect x="194.3" y="8.5" width="1.5" height="1" fill="#1f50a8" opacity="0.77"/><rect x="140.6" y="2.2" width="3" height="1" fill="#1f50a8" opacity="0.63"/><rect x="443.8" y="7.7" width="3" height="1" fill="#1f50a8" opacity="0.63"/><rect x="143.5" y="1.9" width="3" height="1" fill="#2a60b8" opacity="0.55"/><rect x="149.9" y="3.4" width="1" height="1" fill="#184a9a" opacity="0.61"/><rect x="257.9" y="4.9" width="3" height="1" fill="#1f50a8" opacity="0.42"/><rect x="946.6" y="3.5" width="1.5" height="1" fill="#2a60b8" opacity="0.39"/><rect x="335.7" y="1.5" width="2" height="1" fill="#2a60b8" opacity="0.51"/><rect x="44.3" y="3.6" width="1.5" height="1" fill="#2a60b8" opacity="0.73"/><rect x="511.0" y="2.8" width="1" height="1" fill="#1f50a8" opacity="0.75"/><rect x="175.1" y="6.5" width="1.5" height="1" fill="#184a9a" opacity="0.44"/><rect x="843.6" y="1.6" width="3" height="1" fill="#2a60b8" opacity="0.74"/><rect x="263.3" y="7.7" width="2" height="1" fill="#1f50a8" opacity="0.42"/><rect x="365.0" y="1.5" width="3" height="1" fill="#1f50a8" opacity="0.40"/><rect x="844.5" y="6.8" width="3" height="1" fill="#1f50a8" opacity="0.48"/><rect x="438.0" y="7.5" width="1.5" height="1" fill="#1f50a8" opacity="0.46"/><rect x="167.8" y="5.7" width="1" height="1" fill="#1f50a8" opacity="0.39"/><rect x="683.0" y="1.6" width="3" height="1" fill="#2a60b8" opacity="0.67"/><rect x="700.6" y="2.4" width="3" height="1" fill="#184a9a" opacity="0.40"/><rect x="530.3" y="3.2" width="3" height="1" fill="#3a70c8" opacity="0.42"/><rect x="382.1" y="7.8" width="1" height="1" fill="#3a70c8" opacity="0.79"/><rect x="55.4" y="4.5" width="2" height="1" fill="#3a70c8" opacity="0.73"/><rect x="316.0" y="5.7" width="2" height="1" fill="#2a60b8" opacity="0.78"/><rect x="911.3" y="4.7" width="1" height="1" fill="#184a9a" opacity="0.40"/><rect x="186.9" y="3.0" width="1" height="1" fill="#2a60b8" opacity="0.41"/><rect x="863.1" y="6.3" width="2" height="1" fill="#184a9a" opacity="0.63"/><rect x="787.1" y="2.3" width="1" height="1" fill="#1f50a8" opacity="0.55"/><rect x="927.3" y="3.8" width="1.5" height="1" fill="#1f50a8" opacity="0.38"/><rect x="879.4" y="5.9" width="1.5" height="1" fill="#3a70c8" opacity="0.41"/><rect x="132.4" y="4.5" width="2" height="1" fill="#184a9a" opacity="0.46"/><rect x="90.2" y="7.8" width="1.5" height="1" fill="#3a70c8" opacity="0.44"/><rect x="694.0" y="5.6" width="3" height="1" fill="#3a70c8" opacity="0.72"/><rect x="35.0" y="2.9" width="3" height="1" fill="#3a70c8" opacity="0.36"/><rect x="347.1" y="3.3" width="2" height="1" fill="#3a70c8" opacity="0.47"/><rect x="857.0" y="1.9" width="1" height="1" fill="#2a60b8" opacity="0.60"/><rect x="592.7" y="6.4" width="3" height="1" fill="#3a70c8" opacity="0.51"/><rect x="745.0" y="8.9" width="1.5" height="1" fill="#3a70c8" opacity="0.50"/><rect x="346.9" y="6.1" width="2" height="1" fill="#1f50a8" opacity="0.68"/><rect x="573.3" y="8.7" width="1.5" height="1" fill="#3a70c8" opacity="0.73"/><rect x="676.9" y="4.1" width="2" height="1" fill="#3a70c8" opacity="0.59"/><rect x="965.0" y="3.8" width="2" height="1" fill="#2a60b8" opacity="0.55"/><rect x="370.7" y="7.7" width="2" height="1" fill="#184a9a" opacity="0.79"/><rect x="594.8" y="3.9" width="3" height="1" fill="#1f50a8" opacity="0.36"/><rect x="295.8" y="3.8" width="3" height="1" fill="#3a70c8" opacity="0.53"/><rect x="352.0" y="4.1" width="1" height="1" fill="#1f50a8" opacity="0.59"/><rect x="101.0" y="4.5" width="1.5" height="1" fill="#2a60b8" opacity="0.78"/><rect x="477.1" y="6.2" width="2" height="1" fill="#1f50a8" opacity="0.43"/><rect x="806.2" y="2.3" width="2" height="1" fill="#184a9a" opacity="0.72"/><rect x="413.3" y="3.7" width="1.5" height="1" fill="#2a60b8" opacity="0.54"/><rect x="617.4" y="6.7" width="1" height="1" fill="#1f50a8" opacity="0.49"/><rect x="675.0" y="3.8" width="1" height="1" fill="#1f50a8" opacity="0.65"/><rect x="195.8" y="5.6" width="2" height="1" fill="#2a60b8" opacity="0.61"/><rect x="403.8" y="2.7" width="1" height="1" fill="#1f50a8" opacity="0.40"/><rect x="170.4" y="7.7" width="3" height="1" fill="#1f50a8" opacity="0.64"/><rect x="144.6" y="3.6" width="1" height="1" fill="#184a9a" opacity="0.63"/><rect x="66.1" y="6.2" width="1" height="1" fill="#1f50a8" opacity="0.45"/><rect x="389.1" y="1.8" width="1" height="1" fill="#2a60b8" opacity="0.46"/><rect x="834.1" y="8.2" width="3" height="1" fill="#184a9a" opacity="0.54"/><rect x="955.2" y="6.6" width="1.5" height="1" fill="#3a70c8" opacity="0.49"/><rect x="854.0" y="7.4" width="1.5" height="1" fill="#1f50a8" opacity="0.43"/><rect x="352.6" y="8.8" width="2" height="1" fill="#3a70c8" opacity="0.60"/><rect x="116.4" y="4.4" width="3" height="1" fill="#1f50a8" opacity="0.78"/><rect x="542.2" y="5.0" width="2" height="1" fill="#2a60b8" opacity="0.55"/><rect x="275.8" y="7.5" width="1.5" height="1" fill="#2a60b8" opacity="0.39"/><rect x="129.0" y="7.8" width="1.5" height="1" fill="#2a60b8" opacity="0.52"/><rect x="215.0" y="6.2" width="1.5" height="1" fill="#184a9a" opacity="0.78"/><rect x="494.7" y="4.9" width="1.5" height="1" fill="#184a9a" opacity="0.62"/><rect x="523.6" y="5.3" width="1.5" height="1" fill="#1f50a8" opacity="0.66"/><rect x="145.7" y="6.8" width="1.5" height="1" fill="#2a60b8" opacity="0.49"/><rect x="647.9" y="5.7" width="2" height="1" fill="#184a9a" opacity="0.44"/><rect x="702.2" y="3.7" width="3" height="1" fill="#184a9a" opacity="0.51"/><rect x="824.0" y="6.2" width="1.5" height="1" fill="#184a9a" opacity="0.43"/><rect x="360.6" y="6.7" width="3" height="1" fill="#1f50a8" opacity="0.65"/><rect x="683.3" y="7.9" width="2" height="1" fill="#1f50a8" opacity="0.43"/><rect x="44.2" y="2.7" width="1.5" height="1" fill="#184a9a" opacity="0.42"/><rect x="615.6" y="5.7" width="1.5" height="1" fill="#3a70c8" opacity="0.67"/></svg>
<div style="left:5px;top:89.2px;width:971px;height:2px;background:#c9d6f2"></div>
<div class="t" style="left:12.5px;top:79.6px;font-size:11px;color:#e6ecf8;-webkit-text-stroke:0.25px #e6ecf8">06:39:30</div>
<svg style="position:absolute;left:668px;top:79px" width="24" height="11" viewBox="668 79 24 11"><polygon points="670,81.5 672,80.5 676,81 680,80 684,80.5 688.8,80 687,82 688,84 686.5,86 687,87.5 682,87 678,88 674,87.5 671,87.5 672,85.5 670.5,84 672,82.5" fill="#d8ecc0"/><polygon points="673,82 676,81 680,81.5 684,81 686,82.5 685,84.5 686,86.5 681,86.5 677,87 673.5,86.5 674.5,84.5" fill="#f4dc28"/><ellipse cx="680" cy="84" rx="3.5" ry="1.8" fill="#ffe000"/><rect x="670" y="81" width="2" height="6" fill="#a8c8f0" opacity="0.7"/></svg>
<svg style="position:absolute;left:0;top:0" width="1000" height="210"><line x1="593.3" y1="80" x2="593.3" y2="203.5" stroke="#d02020" stroke-width="1.2" stroke-dasharray="3,2"/><line x1="610.9" y1="80" x2="610.9" y2="203.5" stroke="#d02020" stroke-width="1.2" stroke-dasharray="3,2"/><line x1="841.2" y1="80" x2="841.2" y2="203.5" stroke="#30d030" stroke-width="1.2" stroke-dasharray="3,2"/><line x1="854.4" y1="80" x2="854.4" y2="203.5" stroke="#30d030" stroke-width="1.2" stroke-dasharray="3,2"/></svg>
<div style="left:48px;top:187.7px;width:75px;height:15.7px;background:#061632"></div>
<div class="t" style="left:51.5px;top:191px;font-size:11px;color:#e4e8f0">DF: -1860 Hz</div>
<div style="left:863px;top:188px;width:70px;height:15.4px;background:#061632"></div>
<div class="t" style="left:867.5px;top:191px;font-size:11px;color:#e4e8f0">RX: 2848 Hz</div>
<div style="left:979px;top:54.8px;width:19px;height:170px;background:#0c0c0c"></div>
<div style="left:979px;top:54.8px;width:19px;height:33px;background:linear-gradient(#2a2a2a,#000 70%)"></div>
<div class="t" style="left:981px;top:58.8px;font-size:12.2px;font-weight:bold;color:#bf9a3a">1D</div>
<div style="left:979.5px;top:88px;width:18px;height:60px;background:#232323;border-top:1px solid #4a4a4a"></div>
<div style="left:987px;top:92px;width:2.5px;height:53px;background:#4e4e4e;border-left:1px solid #3a3a3a"></div>
<div style="left:981px;top:97px;width:4.5px;height:1.2px;background:#b8b8b8"></div>
<div style="left:991.5px;top:97px;width:4.5px;height:1.2px;background:#b8b8b8"></div>
<div style="left:981px;top:103px;width:4.5px;height:1.2px;background:#b8b8b8"></div>
<div style="left:991.5px;top:103px;width:4.5px;height:1.2px;background:#b8b8b8"></div>
<div style="left:981px;top:108px;width:4.5px;height:1.2px;background:#b8b8b8"></div>
<div style="left:991.5px;top:108px;width:4.5px;height:1.2px;background:#b8b8b8"></div>
<div style="left:981px;top:113px;width:4.5px;height:1.2px;background:#b8b8b8"></div>
<div style="left:991.5px;top:113px;width:4.5px;height:1.2px;background:#b8b8b8"></div>
<div style="left:981px;top:119px;width:4.5px;height:1.2px;background:#b8b8b8"></div>
<div style="left:991.5px;top:119px;width:4.5px;height:1.2px;background:#b8b8b8"></div>
<div style="left:981px;top:124px;width:4.5px;height:1.2px;background:#b8b8b8"></div>
<div style="left:991.5px;top:124px;width:4.5px;height:1.2px;background:#b8b8b8"></div>
<div style="left:981px;top:129px;width:4.5px;height:1.2px;background:#b8b8b8"></div>
<div style="left:991.5px;top:129px;width:4.5px;height:1.2px;background:#b8b8b8"></div>
<div style="left:981px;top:135px;width:4.5px;height:1.2px;background:#b8b8b8"></div>
<div style="left:991.5px;top:135px;width:4.5px;height:1.2px;background:#b8b8b8"></div>
<div style="left:981px;top:140px;width:4.5px;height:1.2px;background:#b8b8b8"></div>
<div style="left:991.5px;top:140px;width:4.5px;height:1.2px;background:#b8b8b8"></div>
<div style="left:981.5px;top:129.8px;width:13px;height:9px;background:linear-gradient(#9a9a9a,#505050);border-radius:1px"></div>
<div style="left:983.5px;top:132.0px;width:9px;height:4.6px;background:linear-gradient(#f0b030,#c88a10)"></div>
<div style="left:979.5px;top:148.5px;width:18px;height:60.0px;background:#232323;border-top:1px solid #4a4a4a"></div>
<div style="left:987px;top:152.5px;width:2.5px;height:53.0px;background:#4e4e4e;border-left:1px solid #3a3a3a"></div>
<div style="left:981px;top:158px;width:4.5px;height:1.2px;background:#b8b8b8"></div>
<div style="left:991.5px;top:158px;width:4.5px;height:1.2px;background:#b8b8b8"></div>
<div style="left:981px;top:163px;width:4.5px;height:1.2px;background:#b8b8b8"></div>
<div style="left:991.5px;top:163px;width:4.5px;height:1.2px;background:#b8b8b8"></div>
<div style="left:981px;top:169px;width:4.5px;height:1.2px;background:#b8b8b8"></div>
<div style="left:991.5px;top:169px;width:4.5px;height:1.2px;background:#b8b8b8"></div>
<div style="left:981px;top:174px;width:4.5px;height:1.2px;background:#b8b8b8"></div>
<div style="left:991.5px;top:174px;width:4.5px;height:1.2px;background:#b8b8b8"></div>
<div style="left:981px;top:179px;width:4.5px;height:1.2px;background:#b8b8b8"></div>
<div style="left:991.5px;top:179px;width:4.5px;height:1.2px;background:#b8b8b8"></div>
<div style="left:981px;top:185px;width:4.5px;height:1.2px;background:#b8b8b8"></div>
<div style="left:991.5px;top:185px;width:4.5px;height:1.2px;background:#b8b8b8"></div>
<div style="left:981px;top:190px;width:4.5px;height:1.2px;background:#b8b8b8"></div>
<div style="left:991.5px;top:190px;width:4.5px;height:1.2px;background:#b8b8b8"></div>
<div style="left:981px;top:195px;width:4.5px;height:1.2px;background:#b8b8b8"></div>
<div style="left:991.5px;top:195px;width:4.5px;height:1.2px;background:#b8b8b8"></div>
<div style="left:981px;top:201px;width:4.5px;height:1.2px;background:#b8b8b8"></div>
<div style="left:991.5px;top:201px;width:4.5px;height:1.2px;background:#b8b8b8"></div>
<div style="left:981.5px;top:195.3px;width:13px;height:9px;background:linear-gradient(#9a9a9a,#505050);border-radius:1px"></div>
<div style="left:983.5px;top:197.5px;width:9px;height:4.6px;background:linear-gradient(#f0b030,#c88a10)"></div>
<div style="left:3px;top:203.5px;width:975px;height:3px;background:#d8d8d8"></div>
<div style="left:2.3px;top:206.4px;width:71px;height:18.2px;background:#fff;border:1px solid #555;border-width:1px 1px 1.5px 1px"></div>
<div class="t" style="left:6.3px;top:209.3px;font-size:12.4px">Speed 5</div>
<div style="left:56.8px;top:207px;width:16px;height:16.5px;background:#f2f2f2"></div>
<svg style="position:absolute;left:56.8px;top:207px" width="16" height="16.5" viewBox="0 0 16 16.5"><path d="M4.6 5.65 L8.2 1.65 L11.8 5.65Z" fill="#111"/><path d="M4.6 11.65 L8.2 15.45 L11.8 11.65Z" fill="#111"/><rect x="1" y="8.05" width="14" height="1.2" fill="#d4d4d4"/></svg>
<div style="left:73.5px;top:206.4px;width:99px;height:18.2px;background:#fff;border:1px solid #555;border-width:1px 1px 1.5px 1px"></div>
<div class="t" style="left:78.6px;top:209.3px;font-size:12px">Start 100 Hz</div>
<div style="left:155.4px;top:207px;width:16px;height:16.5px;background:#f2f2f2"></div>
<svg style="position:absolute;left:155.4px;top:207px" width="16" height="16.5" viewBox="0 0 16 16.5"><path d="M4.6 5.65 L8.2 1.65 L11.8 5.65Z" fill="#111"/><path d="M4.6 11.65 L8.2 15.45 L11.8 11.65Z" fill="#111"/><rect x="1" y="8.05" width="14" height="1.2" fill="#d4d4d4"/></svg>
<div style="left:172.8px;top:206.4px;width:171px;height:18.2px;background:#fff;border:1px solid #555;border-width:1px 1px 1.5px 1px"></div>
<div class="t" style="left:177px;top:209.3px;font-size:12px">BW 3200 Hz</div>
<div style="left:248.3px;top:207px;width:16px;height:16.5px;background:#f2f2f2"></div>
<svg style="position:absolute;left:248.3px;top:207px" width="16" height="16.5" viewBox="0 0 16 16.5"><path d="M4.6 5.65 L8.2 1.65 L11.8 5.65Z" fill="#111"/><path d="M4.6 11.65 L8.2 15.45 L11.8 11.65Z" fill="#111"/><rect x="1" y="8.05" width="14" height="1.2" fill="#d4d4d4"/></svg>
<div style="left:264px;top:206.5px;width:1.3px;height:17.5px;background:#222"></div>
<div style="left:266.4px;top:209px;width:11.6px;height:12.2px;background:#f4f4f4;border:1px solid #d0d0d0"></div>
<div class="t" style="left:283.7px;top:210.3px;font-size:12px;color:#2a2a2a">FD</div>
<div style="left:305.8px;top:209px;width:12.6px;height:12.2px;background:#ececec;border:1px solid #d0d0d0"></div>
<svg style="position:absolute;left:307.9px;top:210.9px" width="8.5" height="8.5" viewBox="0 0 8.5 8.5"><path d="M1.3 1.3L7.2 7.2M7.2 1.3L1.3 7.2" stroke="#000" stroke-width="2.4" stroke-linecap="round"/></svg>
<div class="t" style="left:323.7px;top:210.3px;font-size:12px;color:#2a2a2a">AF</div>
<div style="left:344.5px;top:206.4px;width:317px;height:18.2px;background:linear-gradient(#f8f8f8,#e0e0e0);border:1px solid #3a3a3a;border-width:1px 1px 1.5px 1px;border-radius:1px"></div>
<div class="ctr" style="left:344.5px;top:206.4px;width:317px;height:18.2px;font-size:10.8px">SAVE THIS</div>
<div style="left:660.5px;top:206.4px;width:1.6px;height:18px;background:#111"></div>
<div style="left:662px;top:206.4px;width:316px;height:18.2px;background:linear-gradient(#f8f8f8,#e0e0e0);border:1px solid #3a3a3a;border-width:1px 1px 1.5px 1px;border-radius:1px"></div>
<div class="ctr" style="left:662px;top:206.4px;width:316px;height:18.2px;font-size:10.8px">SAVE PREVIOUS</div>
<div class="ctr" style="left:6px;top:226px;width:52px;height:19.5px;background:#50e2d6;font-size:12.5px;color:#0d2d2d;padding-top:2.5px">FT8</div>
<div class="cb" style="left:63px;top:229.6px;width:12px;height:11.7px;"></div>
<svg style="position:absolute;left:65px;top:231.3px" width="8.5" height="8.5" viewBox="0 0 8.5 8.5"><path d="M1.3 1.3L7.2 7.2M7.2 1.3L1.3 7.2" stroke="#000" stroke-width="2.4" stroke-linecap="round"/></svg>
<div class="t" style="left:81px;top:230px;font-size:12.4px">Auto Dec</div>
<div class="cb" style="left:144px;top:229.6px;width:12.7px;height:11.7px;"></div>
<svg style="position:absolute;left:146.2px;top:231.3px" width="8.5" height="8.5" viewBox="0 0 8.5 8.5"><path d="M1.3 1.3L7.2 7.2M7.2 1.3L1.3 7.2" stroke="#a0a0a0" stroke-width="2.4" stroke-linecap="round"/></svg>
<div class="t" style="left:162.7px;top:230px;font-size:12.4px;color:#a0a0a0">RT Dec</div>
<div class="ctr" style="left:219px;top:226.4px;width:60px;height:19.2px;background:#ff0606;font-size:12.5px;color:#8a0000;padding-top:2.5px">DECODE</div>
<div class="ctr" style="left:285px;top:226.4px;width:60px;height:19.2px;background:#3ce03c;font-size:12.5px;color:#0a400a;padding-top:2.5px">RECEIVE</div>
<div style="left:350.5px;top:225.5px;width:440px;height:21px;background:#f0f0f0;border-left:1px solid #a8a8a8;border-top:1px solid #a8a8a8;border-right:1px solid #fff;border-bottom:1px solid #fff"></div>
<div class="t" style="left:356px;top:229.8px;font-size:13px;font-weight:bold;color:#1a1a1a">Txing:</div>
<svg style="position:absolute;left:792px;top:225.4px" width="202" height="20.2"><rect x="0" y="0" width="202" height="20.2" fill="#050505"/><rect x="0.00" y="0" width="4.04" height="10.4" fill="#0a3a60"/><rect x="0.50" y="0" width="2.6" height="10.4" fill="#2fb8ee"/><rect x="4.04" y="0" width="4.04" height="10.4" fill="#0a3a60"/><rect x="4.54" y="0" width="2.6" height="10.4" fill="#2fb8ee"/><rect x="8.08" y="0" width="4.04" height="10.4" fill="#0a3a60"/><rect x="8.58" y="0" width="2.6" height="10.4" fill="#2fb8ee"/><rect x="12.12" y="0" width="4.04" height="10.4" fill="#0a3a60"/><rect x="12.62" y="0" width="2.6" height="10.4" fill="#2fb8ee"/><rect x="16.16" y="0" width="4.04" height="10.4" fill="#0a3a60"/><rect x="16.66" y="0" width="2.6" height="10.4" fill="#2fb8ee"/><rect x="20.20" y="0" width="4.04" height="10.4" fill="#0a3a60"/><rect x="20.70" y="0" width="2.6" height="10.4" fill="#2fb8ee"/><rect x="24.24" y="0" width="4.04" height="10.4" fill="#0a3a60"/><rect x="24.74" y="0" width="2.6" height="10.4" fill="#2fb8ee"/><rect x="28.28" y="0" width="4.04" height="10.4" fill="#0a3a60"/><rect x="28.78" y="0" width="2.6" height="10.4" fill="#2fb8ee"/><rect x="32.32" y="0" width="4.04" height="10.4" fill="#0a3a60"/><rect x="32.82" y="0" width="2.6" height="10.4" fill="#2fb8ee"/><rect x="36.36" y="0" width="4.04" height="10.4" fill="#0a3a60"/><rect x="36.86" y="0" width="2.6" height="10.4" fill="#2fb8ee"/><rect x="40.40" y="0" width="4.04" height="10.4" fill="#0a3a60"/><rect x="40.90" y="0" width="2.6" height="10.4" fill="#2fb8ee"/><rect x="44.44" y="0" width="4.04" height="10.4" fill="#0a3a60"/><rect x="44.94" y="0" width="2.6" height="10.4" fill="#2fb8ee"/><rect x="48.48" y="0" width="4.04" height="10.4" fill="#0a3a60"/><rect x="48.98" y="0" width="2.6" height="10.4" fill="#2fb8ee"/><rect x="52.52" y="0" width="4.04" height="10.4" fill="#0a3a60"/><rect x="53.02" y="0" width="2.6" height="10.4" fill="#2fb8ee"/><rect x="56.56" y="0" width="4.04" height="10.4" fill="#0a3a60"/><rect x="57.06" y="0" width="2.6" height="10.4" fill="#2fb8ee"/><rect x="60.60" y="0" width="4.04" height="10.4" fill="#0a3a60"/><rect x="61.10" y="0" width="2.6" height="10.4" fill="#2fb8ee"/><rect x="64.64" y="0" width="4.04" height="10.4" fill="#0a3a60"/><rect x="65.14" y="0" width="2.6" height="10.4" fill="#2fb8ee"/><rect x="68.68" y="0" width="4.04" height="10.4" fill="#0a3a60"/><rect x="69.18" y="0" width="2.6" height="10.4" fill="#2fb8ee"/><rect x="72.72" y="0" width="4.04" height="10.4" fill="#0a3a60"/><rect x="73.22" y="0" width="2.6" height="10.4" fill="#2fb8ee"/><rect x="76.76" y="0" width="4.04" height="10.4" fill="#0a3a60"/><rect x="77.26" y="0" width="2.6" height="10.4" fill="#2fb8ee"/><rect x="80.80" y="0" width="4.04" height="10.4" fill="#0a3a60"/><rect x="81.30" y="0" width="2.6" height="10.4" fill="#2fb8ee"/><rect x="84.84" y="0" width="4.04" height="10.4" fill="#0a3a60"/><rect x="85.34" y="0" width="2.6" height="10.4" fill="#2fb8ee"/><rect x="88.88" y="0" width="4.04" height="10.4" fill="#0a3a60"/><rect x="89.38" y="0" width="2.6" height="10.4" fill="#2fb8ee"/><rect x="92.92" y="0" width="4.04" height="10.4" fill="#0a3a60"/><rect x="93.42" y="0" width="2.6" height="10.4" fill="#2fb8ee"/><rect x="96.96" y="0" width="4.04" height="10.4" fill="#0a3a60"/><rect x="97.46" y="0" width="2.6" height="10.4" fill="#2fb8ee"/><rect x="101.00" y="0" width="4.04" height="10.4" fill="#0a3a0a"/><rect x="101.50" y="0" width="2.6" height="10.4" fill="#33dd11"/><rect x="105.04" y="0" width="4.04" height="10.4" fill="#0a3a0a"/><rect x="105.54" y="0" width="2.6" height="10.4" fill="#33dd11"/><rect x="109.08" y="0" width="4.04" height="10.4" fill="#0a3a0a"/><rect x="109.58" y="0" width="2.6" height="10.4" fill="#33dd11"/><rect x="113.12" y="0" width="4.04" height="10.4" fill="#0a3a0a"/><rect x="113.62" y="0" width="2.6" height="10.4" fill="#33dd11"/><rect x="117.16" y="0" width="4.04" height="10.4" fill="#0a3a0a"/><rect x="117.66" y="0" width="2.6" height="10.4" fill="#33dd11"/><rect x="121.20" y="0" width="4.04" height="10.4" fill="#0a3a0a"/><rect x="121.70" y="0" width="2.6" height="10.4" fill="#33dd11"/><rect x="125.24" y="0" width="4.04" height="10.4" fill="#0a3a0a"/><rect x="125.74" y="0" width="2.6" height="10.4" fill="#33dd11"/><rect x="129.28" y="0" width="4.04" height="10.4" fill="#0a3a0a"/><rect x="129.78" y="0" width="2.6" height="10.4" fill="#33dd11"/><rect x="133.32" y="0" width="4.04" height="10.4" fill="#0a3a0a"/><rect x="133.82" y="0" width="2.6" height="10.4" fill="#33dd11"/><rect x="137.36" y="0" width="4.04" height="10.4" fill="#0a3a0a"/><rect x="137.86" y="0" width="2.6" height="10.4" fill="#33dd11"/><rect x="141.40" y="0" width="4.04" height="10.4" fill="#0a3a0a"/><rect x="141.90" y="0" width="2.6" height="10.4" fill="#33dd11"/><rect x="145.44" y="0" width="4.04" height="10.4" fill="#3a0a0a"/><rect x="145.94" y="0" width="2.6" height="10.4" fill="#ff1a1a"/><rect x="149.48" y="0" width="4.04" height="10.4" fill="#3a0a0a"/><rect x="149.98" y="0" width="2.6" height="10.4" fill="#ff1a1a"/><rect x="153.52" y="0" width="4.04" height="10.4" fill="#3a0a0a"/><rect x="154.02" y="0" width="2.6" height="10.4" fill="#ff1a1a"/><rect x="157.56" y="0" width="4.04" height="10.4" fill="#3a0a0a"/><rect x="158.06" y="0" width="2.6" height="10.4" fill="#ff1a1a"/><rect x="161.60" y="0" width="4.04" height="10.4" fill="#3a0a0a"/><rect x="162.10" y="0" width="2.6" height="10.4" fill="#ff1a1a"/><rect x="165.64" y="0" width="4.04" height="10.4" fill="#3a0a0a"/><rect x="166.14" y="0" width="2.6" height="10.4" fill="#ff1a1a"/><rect x="169.68" y="0" width="4.04" height="10.4" fill="#3a0a0a"/><rect x="170.18" y="0" width="2.6" height="10.4" fill="#ff1a1a"/><rect x="173.72" y="0" width="4.04" height="10.4" fill="#3a0a0a"/><rect x="174.22" y="0" width="2.6" height="10.4" fill="#ff1a1a"/><rect x="177.76" y="0" width="4.04" height="10.4" fill="#3a0a0a"/><rect x="178.26" y="0" width="2.6" height="10.4" fill="#ffee22"/><rect x="181.80" y="0" width="4.04" height="10.4" fill="#2a0505"/><rect x="182.30" y="0" width="2.6" height="10.4" fill="#5a0a0a"/><rect x="185.84" y="0" width="4.04" height="10.4" fill="#2a0505"/><rect x="186.34" y="0" width="2.6" height="10.4" fill="#5a0a0a"/><rect x="189.88" y="0" width="4.04" height="10.4" fill="#2a0505"/><rect x="190.38" y="0" width="2.6" height="10.4" fill="#5a0a0a"/><rect x="193.92" y="0" width="4.04" height="10.4" fill="#2a0505"/><rect x="194.42" y="0" width="2.6" height="10.4" fill="#5a0a0a"/><rect x="197.96" y="0" width="4.04" height="10.4" fill="#2a0505"/><rect x="198.46" y="0" width="2.6" height="10.4" fill="#5a0a0a"/></svg>
<div class="t" style="left:795px;top:236.2px;font-size:10px;font-weight:bold;color:#2fa8e0">dB</div>
<div class="t" style="left:816.5px;top:236.2px;font-size:10px;font-weight:bold;color:#2fa8e0">-40</div>
<div class="t" style="left:843px;top:236.2px;font-size:10px;font-weight:bold;color:#2fa8e0">-30</div>
<div class="t" style="left:868.5px;top:236.2px;font-size:10px;font-weight:bold;color:#2fa8e0">-20</div>
<div class="t" style="left:894px;top:236.2px;font-size:10px;font-weight:bold;color:#22b022">-10</div>
<div class="t" style="left:921px;top:236.2px;font-size:10px;font-weight:bold;color:#22b022">0</div>
<div class="t" style="left:935px;top:236.2px;font-size:10px;font-weight:bold;color:#e01818">+10</div>
<div class="t" style="left:959px;top:236.2px;font-size:10px;font-weight:bold;color:#e01818">+20</div>
<div class="t" style="left:979px;top:236.2px;font-size:10px;font-weight:bold;color:#e01818">dB</div>
<div style="left:3px;top:247.5px;width:479px;height:319px;background:#fff;border:1px solid #a0a0a0;border-right:none"></div>
<div class="ctr hdr" style="left:4.5px;top:248.5px;width:70.0px;height:18.7px;">Time</div>
<div class="vd" style="left:74.5px;top:267px;width:1px;height:298px;"></div>
<div class="ctr hdr" style="left:75.5px;top:248.5px;width:45.0px;height:18.7px;">dB</div>
<div class="vd" style="left:120.5px;top:267px;width:1px;height:298px;"></div>
<div class="ctr hdr" style="left:121px;top:248.5px;width:50px;height:18.7px;">DT</div>
<div class="vd" style="left:171px;top:267px;width:1px;height:298px;"></div>
<div class="ctr hdr" style="left:171.5px;top:248.5px;width:150.0px;height:18.7px;">Message 0</div>
<div class="vd" style="left:321.5px;top:267px;width:1px;height:298px;"></div>
<div class="ctr hdr" style="left:322px;top:248.5px;width:104.5px;height:18.7px;">Country</div>
<div class="vd" style="left:426.5px;top:267px;width:1px;height:298px;"></div>
<div class="ctr hdr" style="left:427px;top:248.5px;width:54.5px;height:18.7px;">Freq</div>
<div style="left:482px;top:248px;width:16px;height:318px;background:#ececec;border-left:1px solid #a6a6a6;border-right:1px solid #a6a6a6"></div>
<div class="ctr" style="left:482px;top:248.7px;width:16px;height:15.5px;background:linear-gradient(#fff,#e8e8e8);border:1px solid #a6a6a6;border-radius:2px"><svg width="9" height="6"><path d="M0.5 5.5L4.5 0.8L8.5 5.5Z" fill="#000"/></svg></div>
<div style="left:482px;top:264.2px;width:16px;height:268.8px;background:linear-gradient(90deg,#f8f8f8,#e6e6e6);border:1px solid #9a9a9a;border-radius:2px"></div>
<svg style="position:absolute;left:486px;top:390px" width="9" height="18"><circle cx="1" cy="1.5" r="0.8" fill="#aaa"/><circle cx="4" cy="1.5" r="0.8" fill="#aaa"/><circle cx="7" cy="1.5" r="0.8" fill="#aaa"/><circle cx="1" cy="5.2" r="0.8" fill="#aaa"/><circle cx="4" cy="5.2" r="0.8" fill="#aaa"/><circle cx="7" cy="5.2" r="0.8" fill="#aaa"/><circle cx="1" cy="8.9" r="0.8" fill="#aaa"/><circle cx="4" cy="8.9" r="0.8" fill="#aaa"/><circle cx="7" cy="8.9" r="0.8" fill="#aaa"/><circle cx="1" cy="12.600000000000001" r="0.8" fill="#aaa"/><circle cx="4" cy="12.600000000000001" r="0.8" fill="#aaa"/><circle cx="7" cy="12.600000000000001" r="0.8" fill="#aaa"/><circle cx="1" cy="16.3" r="0.8" fill="#aaa"/><circle cx="4" cy="16.3" r="0.8" fill="#aaa"/><circle cx="7" cy="16.3" r="0.8" fill="#aaa"/></svg>
<div class="ctr" style="left:482px;top:533.4px;width:16px;height:15px;background:linear-gradient(#fff,#e4e4e4);border:1px solid #8e8e8e;border-radius:3px;padding-top:0"><svg width="9" height="6"><path d="M0.5 5.5L4.5 0.8L8.5 5.5Z" fill="#000"/></svg></div>
<div class="ctr" style="left:482px;top:549px;width:16px;height:15.8px;background:linear-gradient(#fff,#e4e4e4);border:1px solid #8e8e8e;border-radius:3px;padding-top:0"><svg width="9" height="6"><path d="M0.5 0.5L4.5 5.2L8.5 0.5Z" fill="#000"/></svg></div>
<div style="left:497.8px;top:247.5px;width:3.6px;height:319px;background:#dadada;border-left:1px solid #c4c4c4"></div>
<div style="left:500.5px;top:247.5px;width:479.5px;height:319px;background:#fff;border:1px solid #a0a0a0;border-right:none"></div>
<div class="ctr hdr" style="left:502px;top:248.5px;width:71px;height:18.7px;">Time</div>
<div class="vd" style="left:573px;top:267px;width:1px;height:298px;"></div>
<div class="ctr hdr" style="left:573.5px;top:248.5px;width:44.0px;height:18.7px;">dB</div>
<div class="vd" style="left:617.5px;top:267px;width:1px;height:298px;"></div>
<div class="ctr hdr" style="left:618px;top:248.5px;width:50px;height:18.7px;">DT</div>
<div class="vd" style="left:668px;top:267px;width:1px;height:298px;"></div>
<div class="ctr hdr" style="left:668.5px;top:248.5px;width:151.5px;height:18.7px;"><span style="letter-spacing:-0.5px">RX Frequency Message</span></div>
<div class="vd" style="left:820px;top:267px;width:1px;height:298px;"></div>
<div class="ctr hdr" style="left:820.5px;top:248.5px;width:104.0px;height:18.7px;">Country</div>
<div class="vd" style="left:924.5px;top:267px;width:1px;height:298px;"></div>
<div class="ctr hdr" style="left:925px;top:248.5px;width:54.5px;height:18.7px;">Freq</div>
<div style="left:980px;top:248px;width:16px;height:318px;background:#ececec;border-left:1px solid #a6a6a6;border-right:1px solid #a6a6a6"></div>
<div class="ctr" style="left:980px;top:248.7px;width:16px;height:15.5px;background:linear-gradient(#fff,#e8e8e8);border:1px solid #a6a6a6;border-radius:2px"><svg width="9" height="6"><path d="M0.5 5.5L4.5 0.8L8.5 5.5Z" fill="#000"/></svg></div>
<div style="left:980px;top:264.2px;width:16px;height:268.8px;background:linear-gradient(90deg,#f8f8f8,#e6e6e6);border:1px solid #9a9a9a;border-radius:2px"></div>
<svg style="position:absolute;left:984px;top:390px" width="9" height="18"><circle cx="1" cy="1.5" r="0.8" fill="#aaa"/><circle cx="4" cy="1.5" r="0.8" fill="#aaa"/><circle cx="7" cy="1.5" r="0.8" fill="#aaa"/><circle cx="1" cy="5.2" r="0.8" fill="#aaa"/><circle cx="4" cy="5.2" r="0.8" fill="#aaa"/><circle cx="7" cy="5.2" r="0.8" fill="#aaa"/><circle cx="1" cy="8.9" r="0.8" fill="#aaa"/><circle cx="4" cy="8.9" r="0.8" fill="#aaa"/><circle cx="7" cy="8.9" r="0.8" fill="#aaa"/><circle cx="1" cy="12.600000000000001" r="0.8" fill="#aaa"/><circle cx="4" cy="12.600000000000001" r="0.8" fill="#aaa"/><circle cx="7" cy="12.600000000000001" r="0.8" fill="#aaa"/><circle cx="1" cy="16.3" r="0.8" fill="#aaa"/><circle cx="4" cy="16.3" r="0.8" fill="#aaa"/><circle cx="7" cy="16.3" r="0.8" fill="#aaa"/></svg>
<div class="ctr" style="left:980px;top:533.4px;width:16px;height:15px;background:linear-gradient(#fff,#e4e4e4);border:1px solid #8e8e8e;border-radius:3px;padding-top:0"><svg width="9" height="6"><path d="M0.5 5.5L4.5 0.8L8.5 5.5Z" fill="#000"/></svg></div>
<div class="ctr" style="left:980px;top:549px;width:16px;height:15.8px;background:linear-gradient(#fff,#e4e4e4);border:1px solid #8e8e8e;border-radius:3px;padding-top:0"><svg width="9" height="6"><path d="M0.5 0.5L4.5 5.2L8.5 0.5Z" fill="#000"/></svg></div>
<div style="left:996px;top:247.5px;width:2px;height:319px;background:#f0f0f0"></div>
<div style="left:3px;top:565.8px;width:995px;height:1.5px;background:#a4a4a4"></div>
<div class="ctr" style="left:2px;top:567.6px;width:155.5px;height:19.6px;background:linear-gradient(#3ee63e,#2ed82e);border:1px solid #2aa82a;border-radius:3px;font-size:12px;color:#0a3a0a">MONITOR</div>
<div class="ctr btn" style="left:158px;top:567.6px;width:154.5px;height:19.6px;font-size:12px;color:#1e1e1e">STOP MONITOR</div>
<div class="ctr btn" style="left:313px;top:567.6px;width:154px;height:19.6px;font-size:12px;color:#1e1e1e">CLR MSG</div>
<div class="ctr btn" style="left:467.5px;top:567.6px;width:154.5px;height:19.6px;font-size:12px;color:#1e1e1e">CLR RX FREQ MSG</div>
<div class="ctr btn" style="left:622.5px;top:567.6px;width:154.5px;height:19.6px;font-size:12px;color:#1e1e1e">RESET QSO</div>
<div class="ctr btn" style="left:778px;top:567.6px;width:154.5px;height:19.6px;font-size:12px;color:#1e1e1e">STOP TX</div>
<div class="ctr btn" style="left:933.5px;top:567.6px;width:63.0px;height:19.6px;font-size:12px;color:#1e1e1e">TUNE</div>
<div style="left:3.5px;top:588.2px;width:368.5px;height:165.29999999999995px;border-left:1.5px solid #fff;border-top:1.5px solid #fff;border-right:1.8px solid #7a7a7a;border-bottom:1.8px solid #7a7a7a"></div>
<div style="left:373px;top:588.2px;width:297px;height:165.29999999999995px;border-left:1.5px solid #fff;border-top:1.5px solid #fff;border-right:1.8px solid #7a7a7a;border-bottom:1.8px solid #7a7a7a"></div>
<div style="left:671px;top:588.2px;width:325px;height:165.29999999999995px;border-left:1.5px solid #fff;border-top:1.5px solid #fff;border-right:1.8px solid #7a7a7a;border-bottom:1.8px solid #7a7a7a"></div>
<div style="left:1px;top:753.8px;width:997.5px;height:2px;background:#fafafa"></div>
<div class="t" style="left:45.3px;top:601.5px;font-size:16px;font-weight:bold;color:#111">JA1XUY PM95</div>
<div style="left:166.6px;top:598.4px;width:162.8px;height:21.7px;background:#cff5cf;border:1px solid #9cc49c;border-radius:3px"></div>
<div class="t" style="left:172.8px;top:604px;font-size:12.5px;font-weight:bold;color:#152a55;letter-spacing:0.3px">USB</div>
<div class="t" style="left:211.6px;top:602px;font-size:16px;font-weight:bold;color:#111">28.074.000</div>
<div class="ctr" style="left:310.7px;top:602px;width:14.3px;height:14px;background:linear-gradient(#fafafa,#e0e0e0);border:1px solid #888;border-radius:3px;font-size:12px;font-weight:bold;color:#222">F</div>
<div class="ctr" style="left:7.6px;top:624.5px;width:81.8px;height:19.8px;background:linear-gradient(#f8cece,#eeb4b4);border:1px solid #d09a9a;border-radius:3px;font-size:12px;color:#222">ADD TO LOG</div>
<div class="t" style="left:92.6px;top:628.5px;font-size:12px;color:#c4203c">TO RADIO:</div>
<div class="yel" style="left:154px;top:624.5px;width:92px;height:19.5px;"></div>
<div class="t" style="left:249px;top:628.5px;font-size:12px;color:#222">RX RPT :</div>
<div class="fld" style="left:300.8px;top:624px;width:52px;height:20.6px;"></div>
<div class="t" style="left:304.5px;top:628.5px;font-size:12px;color:#111">+00</div>
<div style="left:353px;top:624.4px;width:15.2px;height:10.1px;background:linear-gradient(#f0efe6,#dddbcd);border:1px solid #c9c7b8;border-radius:2px"></div>
<div style="left:353px;top:634.5px;width:15.2px;height:10.1px;background:linear-gradient(#f0efe6,#dddbcd);border:1px solid #c9c7b8;border-radius:2px"></div>
<svg style="position:absolute;left:353px;top:624.4px" width="15.2" height="20.2" viewBox="0 0 15.2 20.2"><path d="M4.00 6.50 L7.60 2.90 L11.20 6.50Z" fill="#111"/><path d="M4.00 13.70 L7.60 17.30 L11.20 13.70Z" fill="#111"/></svg>
<div class="t" style="left:35.7px;top:653.5px;font-size:12px;color:#c4203c">LOCATOR:</div>
<div class="yel" style="left:97.3px;top:649.6px;width:92.5px;height:19.8px;"></div>
<div class="t" style="left:193px;top:653.5px;font-size:12px;color:#222">DB:NA</div>
<div class="ctr btn" style="left:231.5px;top:649.4px;width:59.5px;height:20.2px;font-size:12px;color:#c4203c">LOOKUP</div>
<div class="ctr btn" style="left:293.5px;top:649.4px;width:47px;height:20.2px;font-size:12px;color:#c4203c">ADD</div>
<div class="t" style="left:43.7px;top:677px;font-size:12px;color:#222">Hot : NA°</div>
<div class="t" style="left:102.3px;top:677px;font-size:12px;color:#222">Azimuth: NA°</div>
<div class="t" style="left:182px;top:677px;font-size:12px;color:#222">Elevation: NA°</div>
<div class="t" style="left:268.6px;top:677px;font-size:12px;color:#222">Dist: NA km</div>
<div class="t" style="left:33.8px;top:699px;font-size:12px;color:#222">MONITOR</div>
<div class="t" style="left:92.8px;top:699px;font-size:12px;color:#c4203c">R1:</div>
<div class="yel" style="left:114.6px;top:695.7px;width:100.4px;height:19.4px;"></div>
<div class="t" style="left:220px;top:699px;font-size:12px;color:#c4203c">R2:</div>
<div class="yel" style="left:241.6px;top:695.6px;width:100.4px;height:19.4px;"></div>
<div class="t" style="left:93px;top:722.5px;font-size:16px;font-weight:bold;color:#111">25 Aug 2025</div>
<div class="t" style="left:195.5px;top:720.5px;font-size:21.5px;font-weight:bold;color:#111">06:39:42</div>
<div class="cb" style="left:379.3px;top:596px;width:12px;height:12.3px;"></div>
<div class="t" style="left:397.6px;top:597.5px;font-size:12.4px;color:#222">Super Hound</div>
<div class="cb" style="left:524.5px;top:596.6px;width:12px;height:12px;"></div>
<div class="t" style="left:542.7px;top:597.5px;font-size:12.4px;color:#9a9a9a">Super Fox</div>
<div class="fld" style="left:379px;top:616.8px;width:287.5px;height:19.4px;"></div>
<div class="t" style="left:382.4px;top:620.5px;font-size:12.3px;color:#111">DF Tol def=1500 +/-&nbsp; 1500&nbsp; Hz</div>
<div style="left:650.4px;top:617.3px;width:15.6px;height:18.6px;background:linear-gradient(#f6f6f6,#e4e4e4);border-left:1px solid #d0d0d0;border-radius:0 3px 3px 0"></div>
<svg style="position:absolute;left:650.4px;top:616.8px" width="16" height="19.6" viewBox="0 0 16 19.6"><path d="M4.6 7.20 L8.2 3.20 L11.8 7.20Z" fill="#111"/><path d="M4.6 13.20 L8.2 17.00 L11.8 13.20Z" fill="#111"/><rect x="1" y="9.60" width="14" height="1.2" fill="#d4d4d4"/></svg>
<div class="cb" style="left:378.6px;top:648.3px;width:12px;height:12.4px;"></div>
<div class="t" style="left:396.8px;top:648.5px;font-size:12.4px;color:#222">LTR</div>
<div class="btn" style="left:426.7px;top:645.8px;width:36px;height:19.8px;border-radius:3px 0 0 3px"></div>
<div class="btn" style="left:462.5px;top:645.8px;width:36px;height:19.8px;border-radius:0 3px 3px 0"></div>
<div class="t" style="left:437px;top:649.5px;font-size:12.4px;color:#222">TX</div>
<div class="t" style="left:473.5px;top:649.5px;font-size:12.4px;color:#222">RX</div>
<div style="left:460.5px;top:649px;width:4px;height:13px;background:linear-gradient(#ececec,#e6e6e6)"></div>
<div style="left:458.5px;top:652px;width:9px;height:1.3px;background:#3a3a3a"></div>
<div style="left:458.5px;top:658px;width:9px;height:1.3px;background:#3a3a3a"></div>
<div class="t" style="left:550px;top:649.5px;font-size:12px;color:#222">TX RPT :</div>
<div class="fld" style="left:599.3px;top:645.4px;width:51.2px;height:20px;"></div>
<div class="t" style="left:603px;top:649.5px;font-size:12px;color:#111">+00</div>
<div style="left:651.5px;top:645.6px;width:14.4px;height:9.9px;background:linear-gradient(#f0efe6,#dddbcd);border:1px solid #c9c7b8;border-radius:2px"></div>
<div style="left:651.5px;top:655.5px;width:14.4px;height:9.9px;background:linear-gradient(#f0efe6,#dddbcd);border:1px solid #c9c7b8;border-radius:2px"></div>
<svg style="position:absolute;left:651.5px;top:645.6px" width="14.4" height="19.8" viewBox="0 0 14.4 19.8"><path d="M3.60 6.30 L7.20 2.70 L10.80 6.30Z" fill="#111"/><path d="M3.60 13.50 L7.20 17.10 L10.80 13.50Z" fill="#111"/></svg>
<div class="ctr" style="left:378.2px;top:674.6px;width:29px;height:18.3px;background:#ff0a0a;font-size:11px;font-weight:bold;color:#520000;letter-spacing:-0.2px">ASeq</div>
<div style="left:410.7px;top:673.5px;width:87.6px;height:20.5px;background:#ececec;border:1px solid #8a8a8a;border-radius:3px"></div>
<div class="t" style="left:415.5px;top:678px;font-size:12px;color:#a0a0a0">TX/RX 15&nbsp; s</div>
<div style="left:482.4px;top:673.5px;width:16px;height:20.5px;border:1.2px solid #7a7a7a;background:linear-gradient(#f2f2f2,#dedede);border-radius:0 3px 3px 0"></div>
<div style="left:483.5px;top:683.4px;width:14px;height:1px;background:#9a9a9a"></div>
<svg style="position:absolute;left:482.4px;top:673.5px" width="16" height="20.5"><path d="M4.6 7.2L8 3.6L11.4 7.2Z" fill="#6a6a6a"/><path d="M4.6 13.4L8 17L11.4 13.4Z" fill="#6a6a6a"/></svg>
<div style="left:502.2px;top:674.3px;width:38px;height:19.4px;background:#f0f0f0;border-left:1px solid #c8c8c8;border-top:1px solid #c8c8c8"></div>
<div class="t" style="left:505.5px;top:678.3px;font-size:12px;color:#222">QRG :</div>
<div class="fld" style="left:543px;top:674px;width:123.3px;height:20px;"></div>
<div class="t" style="left:547.5px;top:678px;font-size:12.4px;color:#111">345</div>
<div class="ctr" style="left:378.6px;top:701.4px;width:95px;height:18.6px;background:#ececec;border-left:1px solid #c8c8c8;border-top:1px solid #c8c8c8;font-size:10.6px;color:#222;-webkit-text-stroke:0.3px #222">RXF</div>
<div style="left:475.4px;top:705px;width:12px;height:12px;border:1.3px solid #c4c4c4;border-radius:50%;background:#f8f8f8"></div>
<div class="t" style="left:495px;top:704.8px;font-size:12px;color:#222;letter-spacing:-0.2px">TX FIRST</div>
<div style="left:572.8px;top:705px;width:11px;height:11px;border:1px solid #c8c8c8;border-radius:50%;background:#f4f4f4"></div>
<div style="left:575.3px;top:707.5px;width:6px;height:6px;border-radius:50%;background:#000"></div>
<div class="t" style="left:591.3px;top:704.8px;font-size:12px;color:#222;letter-spacing:-0.1px">TX SECOND</div>
<div class="ctr btn" style="left:379.3px;top:727px;width:141.7px;height:20.2px;font-size:12px;color:#222">GEN MSG</div>
<div class="ctr btn" style="left:523.7px;top:728px;width:141.7px;height:19.4px;font-size:11.8px;color:#222;letter-spacing:-0.15px">AUTO IS OFF</div>
<div class="t" style="left:676.9px;top:592.5px;font-size:11.5px;color:#222">RX</div>
<div class="t" style="left:677.8px;top:607.6px;font-size:9px;color:#c02020">+20</div>
<div style="left:676px;top:619.5px;width:18.5px;height:119.5px;background:#ecead8;border:1px solid #d0cebc;border-bottom:1.5px solid #8a8a80"></div>
<div style="left:684px;top:625.5px;width:3px;height:105.5px;background:#d8d8d8;border:1px solid #c4c4c4;border-radius:1px"></div>
<div style="left:678px;top:629.8px;width:5px;height:1.5px;background:#1e1e1e"></div>
<div style="left:688px;top:629.8px;width:5px;height:1.5px;background:#1e1e1e"></div>
<div style="left:678px;top:635.8px;width:5px;height:1.5px;background:#1e1e1e"></div>
<div style="left:688px;top:635.8px;width:5px;height:1.5px;background:#1e1e1e"></div>
<div style="left:678px;top:641.8px;width:5px;height:1.5px;background:#1e1e1e"></div>
<div style="left:688px;top:641.8px;width:5px;height:1.5px;background:#1e1e1e"></div>
<div style="left:678px;top:648.8px;width:5px;height:1.5px;background:#1e1e1e"></div>
<div style="left:688px;top:648.8px;width:5px;height:1.5px;background:#1e1e1e"></div>
<div style="left:678px;top:654.8px;width:5px;height:1.5px;background:#1e1e1e"></div>
<div style="left:688px;top:654.8px;width:5px;height:1.5px;background:#1e1e1e"></div>
<div style="left:678px;top:660.8px;width:5px;height:1.5px;background:#1e1e1e"></div>
<div style="left:688px;top:660.8px;width:5px;height:1.5px;background:#1e1e1e"></div>
<div style="left:678px;top:666.8px;width:5px;height:1.5px;background:#1e1e1e"></div>
<div style="left:688px;top:666.8px;width:5px;height:1.5px;background:#1e1e1e"></div>
<div style="left:678px;top:672.8px;width:5px;height:1.5px;background:#1e1e1e"></div>
<div style="left:688px;top:672.8px;width:5px;height:1.5px;background:#1e1e1e"></div>
<div style="left:678px;top:678.8px;width:5px;height:1.5px;background:#1e1e1e"></div>
<div style="left:688px;top:678.8px;width:5px;height:1.5px;background:#1e1e1e"></div>
<div style="left:678px;top:684.8px;width:5px;height:1.5px;background:#1e1e1e"></div>
<div style="left:688px;top:684.8px;width:5px;height:1.5px;background:#1e1e1e"></div>
<div style="left:678px;top:690.8px;width:5px;height:1.5px;background:#1e1e1e"></div>
<div style="left:688px;top:690.8px;width:5px;height:1.5px;background:#1e1e1e"></div>
<div style="left:678px;top:696.8px;width:5px;height:1.5px;background:#1e1e1e"></div>
<div style="left:688px;top:696.8px;width:5px;height:1.5px;background:#1e1e1e"></div>
<div style="left:678px;top:702.8px;width:5px;height:1.5px;background:#1e1e1e"></div>
<div style="left:688px;top:702.8px;width:5px;height:1.5px;background:#1e1e1e"></div>
<div style="left:678px;top:708.8px;width:5px;height:1.5px;background:#1e1e1e"></div>
<div style="left:688px;top:708.8px;width:5px;height:1.5px;background:#1e1e1e"></div>
<div style="left:678px;top:714.8px;width:5px;height:1.5px;background:#1e1e1e"></div>
<div style="left:688px;top:714.8px;width:5px;height:1.5px;background:#1e1e1e"></div>
<div style="left:678px;top:720.8px;width:5px;height:1.5px;background:#1e1e1e"></div>
<div style="left:688px;top:720.8px;width:5px;height:1.5px;background:#1e1e1e"></div>
<div style="left:678px;top:726.8px;width:5px;height:1.5px;background:#1e1e1e"></div>
<div style="left:688px;top:726.8px;width:5px;height:1.5px;background:#1e1e1e"></div>
<div style="left:678.5px;top:675.5999999999999px;width:13.5px;height:7.5px;background:linear-gradient(#f4f4f4,#c8c8c8);border:1px solid #9a9a9a;border-radius:1px"></div>
<div style="left:680.5px;top:677.5999999999999px;width:9.5px;height:3.5px;background:#b01818"></div>
<div class="t" style="left:678.5px;top:740.8px;font-size:9.5px;color:#2a3a9a">-20</div>
<div style="left:698.3px;top:592.8px;width:223px;height:19.4px;background:#fff;border:1px solid #b4b4b4;border-radius:3px"></div>
<div class="t" style="left:704.3px;top:597.0px;font-size:11.8px;color:#2c2c98">JA1XUY PM95</div>
<div style="left:927.4px;top:596.4px;width:11.2px;height:11.2px;border:1.2px solid #c2c2c2;border-radius:50%;background:#f8f8f8"></div>
<div class="ctr btn" style="left:944px;top:592.5px;width:28.2px;height:19.7px;font-size:12.4px;color:#1e1e1e">Tx1</div>
<div style="left:698.3px;top:615.8px;width:223px;height:19.4px;background:#fff;border:1px solid #b4b4b4;border-radius:3px"></div>
<div class="t" style="left:704.3px;top:620.0px;font-size:11.8px;color:#2c2c98">JA1XUY +00</div>
<div style="left:927.4px;top:619.4px;width:11.2px;height:11.2px;border:1.2px solid #c2c2c2;border-radius:50%;background:#f8f8f8"></div>
<div class="ctr btn" style="left:944px;top:615.5px;width:28.2px;height:19.7px;font-size:12.4px;color:#1e1e1e">Tx2</div>
<div style="left:698.3px;top:638.8px;width:223px;height:19.4px;background:#fff;border:1px solid #b4b4b4;border-radius:3px"></div>
<div class="t" style="left:704.3px;top:643.0px;font-size:11.8px;color:#2c2c98">JA1XUY R+00</div>
<div style="left:927.4px;top:642.4px;width:11.2px;height:11.2px;border:1.2px solid #c2c2c2;border-radius:50%;background:#f8f8f8"></div>
<div class="ctr btn" style="left:944px;top:638.5px;width:28.2px;height:19.7px;font-size:12.4px;color:#1e1e1e">Tx3</div>
<div style="left:698.3px;top:661.8px;width:223px;height:19.4px;background:#fff;border:1px solid #b4b4b4;border-radius:3px"></div>
<div class="t" style="left:704.3px;top:666.0px;font-size:11.8px;color:#2c2c98">JA1XUY RR73</div>
<div style="left:927.4px;top:665.4px;width:11.2px;height:11.2px;border:1.2px solid #c2c2c2;border-radius:50%;background:#f8f8f8"></div>
<div class="ctr btn" style="left:944px;top:661.5px;width:28.2px;height:19.7px;font-size:12.4px;color:#1e1e1e">Tx4</div>
<div style="left:698.3px;top:684.8px;width:223px;height:19.4px;background:#fff;border:1px solid #b4b4b4;border-radius:3px"></div>
<div class="t" style="left:704.3px;top:689.0px;font-size:11.8px;color:#2c2c98">JA1XUY 73</div>
<div style="left:927.4px;top:688.4px;width:11.2px;height:11.2px;border:1.2px solid #c2c2c2;border-radius:50%;background:#f8f8f8"></div>
<div class="ctr btn" style="left:944px;top:684.5px;width:28.2px;height:19.7px;font-size:12.4px;color:#1e1e1e">Tx5</div>
<div style="left:698.3px;top:707.8px;width:223px;height:19.4px;background:#ffd2d2;border:1px solid #b4b4b4;border-radius:3px"></div>
<div class="t" style="left:702.2px;top:712.0px;font-size:11.8px;color:#2c2c98">CQ JA1XUY PM95</div>
<div style="left:927.4px;top:711.4px;width:11.2px;height:11.2px;border:1.2px solid #c2c2c2;border-radius:50%;background:#f8f8f8"></div>
<div style="left:929.9px;top:713.9px;width:6px;height:6px;border-radius:50%;background:#000"></div>
<div class="ctr btn" style="left:944px;top:707.5px;width:28.2px;height:19.7px;font-size:12.4px;color:#1e1e1e">Tx6</div>
<div style="left:698.3px;top:730.8px;width:223px;height:19.4px;background:#fff;border:1px solid #b4b4b4;border-radius:3px"></div>
<div class="t" style="left:702.2px;top:735.0px;font-size:11.8px;color:#2c2c98">CQ 345 JA1XUY PM95</div>
<div style="left:927.4px;top:734.4px;width:11.2px;height:11.2px;border:1.2px solid #c2c2c2;border-radius:50%;background:#f8f8f8"></div>
<div class="ctr btn" style="left:944px;top:730.5px;width:28.2px;height:19.7px;font-size:12.4px;color:#1e1e1e">Tx7</div>
<div class="t" style="left:977.2px;top:592.5px;font-size:11.5px;color:#222">TX</div>
<div class="t" style="left:974.7px;top:607.4px;font-size:9px;color:#c02020">MAX</div>
<div style="left:976px;top:618.9px;width:18.5px;height:120.10000000000002px;background:#ecead8;border:1px solid #d0cebc;border-bottom:1.5px solid #8a8a80"></div>
<div style="left:984px;top:624.9px;width:3px;height:106.10000000000002px;background:#d8d8d8;border:1px solid #c4c4c4;border-radius:1px"></div>
<div style="left:978px;top:629.8px;width:5px;height:1.5px;background:#1e1e1e"></div>
<div style="left:988px;top:629.8px;width:5px;height:1.5px;background:#1e1e1e"></div>
<div style="left:978px;top:635.8px;width:5px;height:1.5px;background:#1e1e1e"></div>
<div style="left:988px;top:635.8px;width:5px;height:1.5px;background:#1e1e1e"></div>
<div style="left:978px;top:641.8px;width:5px;height:1.5px;background:#1e1e1e"></div>
<div style="left:988px;top:641.8px;width:5px;height:1.5px;background:#1e1e1e"></div>
<div style="left:978px;top:648.8px;width:5px;height:1.5px;background:#1e1e1e"></div>
<div style="left:988px;top:648.8px;width:5px;height:1.5px;background:#1e1e1e"></div>
<div style="left:978px;top:654.8px;width:5px;height:1.5px;background:#1e1e1e"></div>
<div style="left:988px;top:654.8px;width:5px;height:1.5px;background:#1e1e1e"></div>
<div style="left:978px;top:660.8px;width:5px;height:1.5px;background:#1e1e1e"></div>
<div style="left:988px;top:660.8px;width:5px;height:1.5px;background:#1e1e1e"></div>
<div style="left:978px;top:666.8px;width:5px;height:1.5px;background:#1e1e1e"></div>
<div style="left:988px;top:666.8px;width:5px;height:1.5px;background:#1e1e1e"></div>
<div style="left:978px;top:672.8px;width:5px;height:1.5px;background:#1e1e1e"></div>
<div style="left:988px;top:672.8px;width:5px;height:1.5px;background:#1e1e1e"></div>
<div style="left:978px;top:678.8px;width:5px;height:1.5px;background:#1e1e1e"></div>
<div style="left:988px;top:678.8px;width:5px;height:1.5px;background:#1e1e1e"></div>
<div style="left:978px;top:684.8px;width:5px;height:1.5px;background:#1e1e1e"></div>
<div style="left:988px;top:684.8px;width:5px;height:1.5px;background:#1e1e1e"></div>
<div style="left:978px;top:690.8px;width:5px;height:1.5px;background:#1e1e1e"></div>
<div style="left:988px;top:690.8px;width:5px;height:1.5px;background:#1e1e1e"></div>
<div style="left:978px;top:696.8px;width:5px;height:1.5px;background:#1e1e1e"></div>
<div style="left:988px;top:696.8px;width:5px;height:1.5px;background:#1e1e1e"></div>
<div style="left:978px;top:702.8px;width:5px;height:1.5px;background:#1e1e1e"></div>
<div style="left:988px;top:702.8px;width:5px;height:1.5px;background:#1e1e1e"></div>
<div style="left:978px;top:708.8px;width:5px;height:1.5px;background:#1e1e1e"></div>
<div style="left:988px;top:708.8px;width:5px;height:1.5px;background:#1e1e1e"></div>
<div style="left:978px;top:714.8px;width:5px;height:1.5px;background:#1e1e1e"></div>
<div style="left:988px;top:714.8px;width:5px;height:1.5px;background:#1e1e1e"></div>
<div style="left:978px;top:720.8px;width:5px;height:1.5px;background:#1e1e1e"></div>
<div style="left:988px;top:720.8px;width:5px;height:1.5px;background:#1e1e1e"></div>
<div style="left:978px;top:726.8px;width:5px;height:1.5px;background:#1e1e1e"></div>
<div style="left:988px;top:726.8px;width:5px;height:1.5px;background:#1e1e1e"></div>
<div style="left:978.5px;top:630.1999999999999px;width:13.5px;height:7.5px;background:linear-gradient(#f4f4f4,#c8c8c8);border:1px solid #9a9a9a;border-radius:1px"></div>
<div style="left:980.5px;top:632.1999999999999px;width:9.5px;height:3.5px;background:#1a8a1a"></div>
<div class="t" style="left:976px;top:740.6px;font-size:9.4px;color:#2626a0;-webkit-text-stroke:0.2px #2626a0">MIN</div>
</body></html>
